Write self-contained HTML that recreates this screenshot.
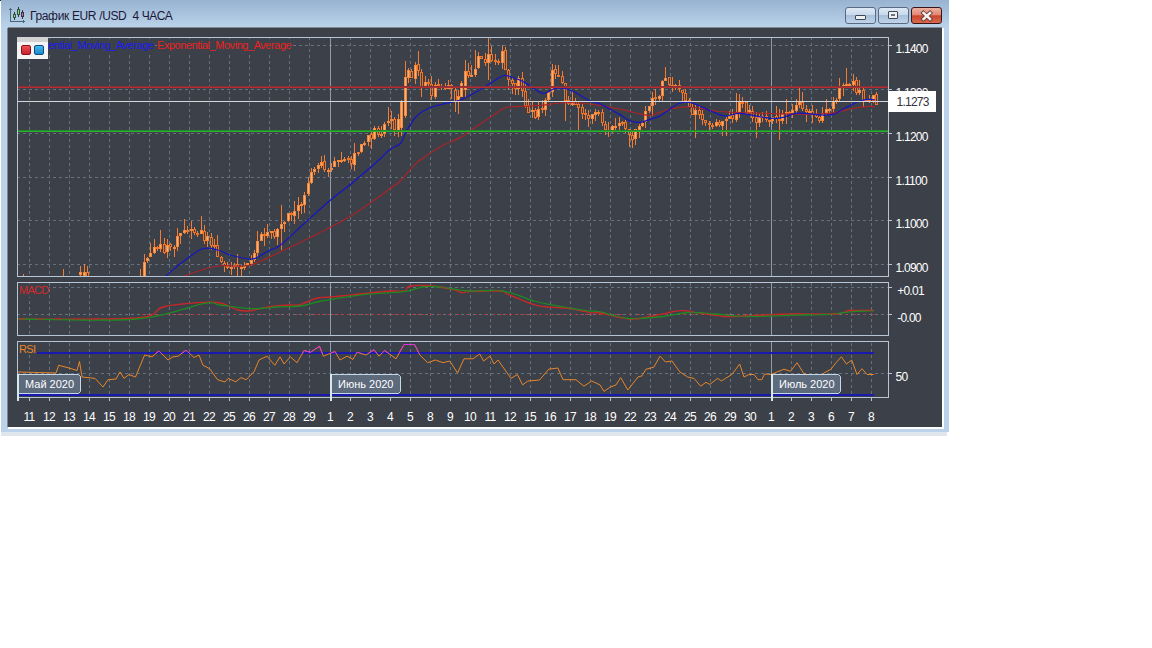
<!DOCTYPE html>
<html><head><meta charset="utf-8">
<style>
html,body{margin:0;padding:0;background:#fff;width:1152px;height:648px;overflow:hidden;font-family:"Liberation Sans",sans-serif;}
.abs{position:absolute;}
#win{left:1px;top:0;width:948px;height:432px;background:#bcd2ea;}
#tbar{left:1px;top:0;width:948px;height:27px;background:linear-gradient(#98b3d1,#bad3ea);}
#tline{left:8px;top:27px;width:934px;height:1px;background:#80878f;}
#shadow{left:1px;top:432px;width:946px;height:4px;background:#dfe6ee;}
#client{left:8px;top:28px;width:934px;height:399px;background:#3b4049;}
#wr{left:942px;top:28px;width:2px;height:401px;background:#fbfdff;}
#wb{left:8px;top:427px;width:936px;height:2px;background:#fbfdff;}
#wl{left:7px;top:28px;width:1px;height:399px;background:#7d8690;}
#title{left:30px;top:9px;font-size:12px;letter-spacing:-0.35px;color:#1c1838;white-space:nowrap;}
.btn{top:7px;width:29px;height:15px;border:1px solid #5a6a82;border-radius:3px;background:linear-gradient(#dfe9f5 0%,#c8d9ec 45%,#a9c0da 50%,#c0d4ea 100%);}
#bclose{border-color:#3a1414;background:linear-gradient(#eeb0a0 0%,#e08a76 45%,#c8452c 52%,#d86a50 100%);}
svg{position:absolute;left:0;top:0;}
#legend{left:17px;top:37px;width:31px;height:22px;background:#f4f4f4;}
#legend .strip{left:0;top:0;width:31px;height:5px;background:#d2d2d2;}
.sq{top:8px;width:8px;height:8px;border:1px solid;border-radius:2px;}
#lt{left:48px;top:39px;font-size:11px;letter-spacing:-0.45px;white-space:nowrap;overflow:hidden;width:106px;height:13px;background:#3b4049;}
.mlab{top:374px;height:17px;background:#5d6878;border:1px solid #c8dce8;border-radius:0 0 5px 0;color:#fff;font-size:12px;line-height:17px;padding-left:7px;box-sizing:content-box;}
#pbox{left:888px;top:91px;width:48px;height:21px;background:#fff;}
#ptxt{left:896.5px;top:95px;font-size:12px;letter-spacing:-0.75px;color:#333344;}
</style></head><body>
<div id="win" class="abs"></div><div class="abs" style="left:0;top:0;width:1px;height:1px;background:#202020"></div>
<div id="tbar" class="abs"></div>
<div id="shadow" class="abs"></div>
<div id="client" class="abs"></div>
<div id="tline" class="abs"></div>
<div id="wl" class="abs"></div>
<div id="wr" class="abs"></div>
<div id="wb" class="abs"></div>
<svg class="abs" width="28" height="28" style="left:0;top:0" shape-rendering="crispEdges">
<path d="M10.5 7.5v14h14" stroke="#4a6478" stroke-width="1" fill="none"/>
<path d="M9 9h3M23 20v3" stroke="#4a6478" stroke-width="1" fill="none"/>
<path d="M14.5 12v8M18.5 7v10M22.5 10v9" stroke="#2c3a40" stroke-width="1"/>
<rect x="13.5" y="14.5" width="2" height="3" fill="#9ad89a" stroke="#2e5a3a" stroke-width="1"/>
<rect x="17.5" y="9.5" width="2" height="5" fill="#8cd08c" stroke="#2e5a3a" stroke-width="1"/>
<rect x="21.5" y="12.5" width="2" height="4" fill="#c47a88" stroke="#3a2e4a" stroke-width="1"/>
</svg>
<div id="title" class="abs">График EUR /USD&nbsp; 4 ЧАСА</div>
<div class="abs btn" style="left:845px"><div class="abs" style="left:9px;top:7px;width:9px;height:3px;background:#eef0f2;border:1px solid #404858;border-radius:1px"></div></div>
<div class="abs btn" style="left:878px"><div class="abs" style="left:9px;top:3px;width:8px;height:6px;background:#eef0f2;border:1px solid #404858;border-radius:1px"><div class="abs" style="left:2px;top:2px;width:4px;height:2px;background:#6a7380"></div></div></div>
<div class="abs btn" id="bclose" style="left:911px"><svg class="abs" style="left:8px;top:2px" width="14" height="12"><path d="M3.5 3l6.5 6M10 3l-6.5 6" stroke="#6a3a30" stroke-width="4.2" stroke-linecap="square"/><path d="M3.5 3l6.5 6M10 3l-6.5 6" stroke="#f4f4f4" stroke-width="2.4" stroke-linecap="square"/></svg></div>
<svg width="1152" height="648" style="font-family:'Liberation Sans',sans-serif">
<path d="M29.5 38v2M29.5 43v3M29.5 49v3M29.5 55v3M29.5 61v3M29.5 67v3M29.5 73v3M29.5 79v3M29.5 85v3M29.5 91v3M29.5 97v3M29.5 103v3M29.5 109v3M29.5 115v3M29.5 121v3M29.5 127v3M29.5 133v3M29.5 139v3M29.5 145v3M29.5 151v3M29.5 157v3M29.5 163v3M29.5 169v3M29.5 175v3M29.5 181v3M29.5 187v3M29.5 193v3M29.5 199v3M29.5 205v3M29.5 211v3M29.5 217v3M29.5 223v3M29.5 229v3M29.5 235v3M29.5 241v3M29.5 247v3M29.5 253v3M29.5 259v3M29.5 265v3M29.5 271v3M49.5 38v2M49.5 43v3M49.5 49v3M49.5 55v3M49.5 61v3M49.5 67v3M49.5 73v3M49.5 79v3M49.5 85v3M49.5 91v3M49.5 97v3M49.5 103v3M49.5 109v3M49.5 115v3M49.5 121v3M49.5 127v3M49.5 133v3M49.5 139v3M49.5 145v3M49.5 151v3M49.5 157v3M49.5 163v3M49.5 169v3M49.5 175v3M49.5 181v3M49.5 187v3M49.5 193v3M49.5 199v3M49.5 205v3M49.5 211v3M49.5 217v3M49.5 223v3M49.5 229v3M49.5 235v3M49.5 241v3M49.5 247v3M49.5 253v3M49.5 259v3M49.5 265v3M49.5 271v3M69.5 38v2M69.5 43v3M69.5 49v3M69.5 55v3M69.5 61v3M69.5 67v3M69.5 73v3M69.5 79v3M69.5 85v3M69.5 91v3M69.5 97v3M69.5 103v3M69.5 109v3M69.5 115v3M69.5 121v3M69.5 127v3M69.5 133v3M69.5 139v3M69.5 145v3M69.5 151v3M69.5 157v3M69.5 163v3M69.5 169v3M69.5 175v3M69.5 181v3M69.5 187v3M69.5 193v3M69.5 199v3M69.5 205v3M69.5 211v3M69.5 217v3M69.5 223v3M69.5 229v3M69.5 235v3M69.5 241v3M69.5 247v3M69.5 253v3M69.5 259v3M69.5 265v3M69.5 271v3M89.5 38v2M89.5 43v3M89.5 49v3M89.5 55v3M89.5 61v3M89.5 67v3M89.5 73v3M89.5 79v3M89.5 85v3M89.5 91v3M89.5 97v3M89.5 103v3M89.5 109v3M89.5 115v3M89.5 121v3M89.5 127v3M89.5 133v3M89.5 139v3M89.5 145v3M89.5 151v3M89.5 157v3M89.5 163v3M89.5 169v3M89.5 175v3M89.5 181v3M89.5 187v3M89.5 193v3M89.5 199v3M89.5 205v3M89.5 211v3M89.5 217v3M89.5 223v3M89.5 229v3M89.5 235v3M89.5 241v3M89.5 247v3M89.5 253v3M89.5 259v3M89.5 265v3M89.5 271v3M109.5 38v2M109.5 43v3M109.5 49v3M109.5 55v3M109.5 61v3M109.5 67v3M109.5 73v3M109.5 79v3M109.5 85v3M109.5 91v3M109.5 97v3M109.5 103v3M109.5 109v3M109.5 115v3M109.5 121v3M109.5 127v3M109.5 133v3M109.5 139v3M109.5 145v3M109.5 151v3M109.5 157v3M109.5 163v3M109.5 169v3M109.5 175v3M109.5 181v3M109.5 187v3M109.5 193v3M109.5 199v3M109.5 205v3M109.5 211v3M109.5 217v3M109.5 223v3M109.5 229v3M109.5 235v3M109.5 241v3M109.5 247v3M109.5 253v3M109.5 259v3M109.5 265v3M109.5 271v3M129.5 38v2M129.5 43v3M129.5 49v3M129.5 55v3M129.5 61v3M129.5 67v3M129.5 73v3M129.5 79v3M129.5 85v3M129.5 91v3M129.5 97v3M129.5 103v3M129.5 109v3M129.5 115v3M129.5 121v3M129.5 127v3M129.5 133v3M129.5 139v3M129.5 145v3M129.5 151v3M129.5 157v3M129.5 163v3M129.5 169v3M129.5 175v3M129.5 181v3M129.5 187v3M129.5 193v3M129.5 199v3M129.5 205v3M129.5 211v3M129.5 217v3M129.5 223v3M129.5 229v3M129.5 235v3M129.5 241v3M129.5 247v3M129.5 253v3M129.5 259v3M129.5 265v3M129.5 271v3M149.5 38v2M149.5 43v3M149.5 49v3M149.5 55v3M149.5 61v3M149.5 67v3M149.5 73v3M149.5 79v3M149.5 85v3M149.5 91v3M149.5 97v3M149.5 103v3M149.5 109v3M149.5 115v3M149.5 121v3M149.5 127v3M149.5 133v3M149.5 139v3M149.5 145v3M149.5 151v3M149.5 157v3M149.5 163v3M149.5 169v3M149.5 175v3M149.5 181v3M149.5 187v3M149.5 193v3M149.5 199v3M149.5 205v3M149.5 211v3M149.5 217v3M149.5 223v3M149.5 229v3M149.5 235v3M149.5 241v3M149.5 247v3M149.5 253v3M149.5 259v3M149.5 265v3M149.5 271v3M169.5 38v2M169.5 43v3M169.5 49v3M169.5 55v3M169.5 61v3M169.5 67v3M169.5 73v3M169.5 79v3M169.5 85v3M169.5 91v3M169.5 97v3M169.5 103v3M169.5 109v3M169.5 115v3M169.5 121v3M169.5 127v3M169.5 133v3M169.5 139v3M169.5 145v3M169.5 151v3M169.5 157v3M169.5 163v3M169.5 169v3M169.5 175v3M169.5 181v3M169.5 187v3M169.5 193v3M169.5 199v3M169.5 205v3M169.5 211v3M169.5 217v3M169.5 223v3M169.5 229v3M169.5 235v3M169.5 241v3M169.5 247v3M169.5 253v3M169.5 259v3M169.5 265v3M169.5 271v3M189.5 38v2M189.5 43v3M189.5 49v3M189.5 55v3M189.5 61v3M189.5 67v3M189.5 73v3M189.5 79v3M189.5 85v3M189.5 91v3M189.5 97v3M189.5 103v3M189.5 109v3M189.5 115v3M189.5 121v3M189.5 127v3M189.5 133v3M189.5 139v3M189.5 145v3M189.5 151v3M189.5 157v3M189.5 163v3M189.5 169v3M189.5 175v3M189.5 181v3M189.5 187v3M189.5 193v3M189.5 199v3M189.5 205v3M189.5 211v3M189.5 217v3M189.5 223v3M189.5 229v3M189.5 235v3M189.5 241v3M189.5 247v3M189.5 253v3M189.5 259v3M189.5 265v3M189.5 271v3M209.5 38v2M209.5 43v3M209.5 49v3M209.5 55v3M209.5 61v3M209.5 67v3M209.5 73v3M209.5 79v3M209.5 85v3M209.5 91v3M209.5 97v3M209.5 103v3M209.5 109v3M209.5 115v3M209.5 121v3M209.5 127v3M209.5 133v3M209.5 139v3M209.5 145v3M209.5 151v3M209.5 157v3M209.5 163v3M209.5 169v3M209.5 175v3M209.5 181v3M209.5 187v3M209.5 193v3M209.5 199v3M209.5 205v3M209.5 211v3M209.5 217v3M209.5 223v3M209.5 229v3M209.5 235v3M209.5 241v3M209.5 247v3M209.5 253v3M209.5 259v3M209.5 265v3M209.5 271v3M229.5 38v2M229.5 43v3M229.5 49v3M229.5 55v3M229.5 61v3M229.5 67v3M229.5 73v3M229.5 79v3M229.5 85v3M229.5 91v3M229.5 97v3M229.5 103v3M229.5 109v3M229.5 115v3M229.5 121v3M229.5 127v3M229.5 133v3M229.5 139v3M229.5 145v3M229.5 151v3M229.5 157v3M229.5 163v3M229.5 169v3M229.5 175v3M229.5 181v3M229.5 187v3M229.5 193v3M229.5 199v3M229.5 205v3M229.5 211v3M229.5 217v3M229.5 223v3M229.5 229v3M229.5 235v3M229.5 241v3M229.5 247v3M229.5 253v3M229.5 259v3M229.5 265v3M229.5 271v3M249.5 38v2M249.5 43v3M249.5 49v3M249.5 55v3M249.5 61v3M249.5 67v3M249.5 73v3M249.5 79v3M249.5 85v3M249.5 91v3M249.5 97v3M249.5 103v3M249.5 109v3M249.5 115v3M249.5 121v3M249.5 127v3M249.5 133v3M249.5 139v3M249.5 145v3M249.5 151v3M249.5 157v3M249.5 163v3M249.5 169v3M249.5 175v3M249.5 181v3M249.5 187v3M249.5 193v3M249.5 199v3M249.5 205v3M249.5 211v3M249.5 217v3M249.5 223v3M249.5 229v3M249.5 235v3M249.5 241v3M249.5 247v3M249.5 253v3M249.5 259v3M249.5 265v3M249.5 271v3M269.5 38v2M269.5 43v3M269.5 49v3M269.5 55v3M269.5 61v3M269.5 67v3M269.5 73v3M269.5 79v3M269.5 85v3M269.5 91v3M269.5 97v3M269.5 103v3M269.5 109v3M269.5 115v3M269.5 121v3M269.5 127v3M269.5 133v3M269.5 139v3M269.5 145v3M269.5 151v3M269.5 157v3M269.5 163v3M269.5 169v3M269.5 175v3M269.5 181v3M269.5 187v3M269.5 193v3M269.5 199v3M269.5 205v3M269.5 211v3M269.5 217v3M269.5 223v3M269.5 229v3M269.5 235v3M269.5 241v3M269.5 247v3M269.5 253v3M269.5 259v3M269.5 265v3M269.5 271v3M289.5 38v2M289.5 43v3M289.5 49v3M289.5 55v3M289.5 61v3M289.5 67v3M289.5 73v3M289.5 79v3M289.5 85v3M289.5 91v3M289.5 97v3M289.5 103v3M289.5 109v3M289.5 115v3M289.5 121v3M289.5 127v3M289.5 133v3M289.5 139v3M289.5 145v3M289.5 151v3M289.5 157v3M289.5 163v3M289.5 169v3M289.5 175v3M289.5 181v3M289.5 187v3M289.5 193v3M289.5 199v3M289.5 205v3M289.5 211v3M289.5 217v3M289.5 223v3M289.5 229v3M289.5 235v3M289.5 241v3M289.5 247v3M289.5 253v3M289.5 259v3M289.5 265v3M289.5 271v3M309.5 38v2M309.5 43v3M309.5 49v3M309.5 55v3M309.5 61v3M309.5 67v3M309.5 73v3M309.5 79v3M309.5 85v3M309.5 91v3M309.5 97v3M309.5 103v3M309.5 109v3M309.5 115v3M309.5 121v3M309.5 127v3M309.5 133v3M309.5 139v3M309.5 145v3M309.5 151v3M309.5 157v3M309.5 163v3M309.5 169v3M309.5 175v3M309.5 181v3M309.5 187v3M309.5 193v3M309.5 199v3M309.5 205v3M309.5 211v3M309.5 217v3M309.5 223v3M309.5 229v3M309.5 235v3M309.5 241v3M309.5 247v3M309.5 253v3M309.5 259v3M309.5 265v3M309.5 271v3M350.5 38v2M350.5 43v3M350.5 49v3M350.5 55v3M350.5 61v3M350.5 67v3M350.5 73v3M350.5 79v3M350.5 85v3M350.5 91v3M350.5 97v3M350.5 103v3M350.5 109v3M350.5 115v3M350.5 121v3M350.5 127v3M350.5 133v3M350.5 139v3M350.5 145v3M350.5 151v3M350.5 157v3M350.5 163v3M350.5 169v3M350.5 175v3M350.5 181v3M350.5 187v3M350.5 193v3M350.5 199v3M350.5 205v3M350.5 211v3M350.5 217v3M350.5 223v3M350.5 229v3M350.5 235v3M350.5 241v3M350.5 247v3M350.5 253v3M350.5 259v3M350.5 265v3M350.5 271v3M370.5 38v2M370.5 43v3M370.5 49v3M370.5 55v3M370.5 61v3M370.5 67v3M370.5 73v3M370.5 79v3M370.5 85v3M370.5 91v3M370.5 97v3M370.5 103v3M370.5 109v3M370.5 115v3M370.5 121v3M370.5 127v3M370.5 133v3M370.5 139v3M370.5 145v3M370.5 151v3M370.5 157v3M370.5 163v3M370.5 169v3M370.5 175v3M370.5 181v3M370.5 187v3M370.5 193v3M370.5 199v3M370.5 205v3M370.5 211v3M370.5 217v3M370.5 223v3M370.5 229v3M370.5 235v3M370.5 241v3M370.5 247v3M370.5 253v3M370.5 259v3M370.5 265v3M370.5 271v3M390.5 38v2M390.5 43v3M390.5 49v3M390.5 55v3M390.5 61v3M390.5 67v3M390.5 73v3M390.5 79v3M390.5 85v3M390.5 91v3M390.5 97v3M390.5 103v3M390.5 109v3M390.5 115v3M390.5 121v3M390.5 127v3M390.5 133v3M390.5 139v3M390.5 145v3M390.5 151v3M390.5 157v3M390.5 163v3M390.5 169v3M390.5 175v3M390.5 181v3M390.5 187v3M390.5 193v3M390.5 199v3M390.5 205v3M390.5 211v3M390.5 217v3M390.5 223v3M390.5 229v3M390.5 235v3M390.5 241v3M390.5 247v3M390.5 253v3M390.5 259v3M390.5 265v3M390.5 271v3M410.5 38v2M410.5 43v3M410.5 49v3M410.5 55v3M410.5 61v3M410.5 67v3M410.5 73v3M410.5 79v3M410.5 85v3M410.5 91v3M410.5 97v3M410.5 103v3M410.5 109v3M410.5 115v3M410.5 121v3M410.5 127v3M410.5 133v3M410.5 139v3M410.5 145v3M410.5 151v3M410.5 157v3M410.5 163v3M410.5 169v3M410.5 175v3M410.5 181v3M410.5 187v3M410.5 193v3M410.5 199v3M410.5 205v3M410.5 211v3M410.5 217v3M410.5 223v3M410.5 229v3M410.5 235v3M410.5 241v3M410.5 247v3M410.5 253v3M410.5 259v3M410.5 265v3M410.5 271v3M430.5 38v2M430.5 43v3M430.5 49v3M430.5 55v3M430.5 61v3M430.5 67v3M430.5 73v3M430.5 79v3M430.5 85v3M430.5 91v3M430.5 97v3M430.5 103v3M430.5 109v3M430.5 115v3M430.5 121v3M430.5 127v3M430.5 133v3M430.5 139v3M430.5 145v3M430.5 151v3M430.5 157v3M430.5 163v3M430.5 169v3M430.5 175v3M430.5 181v3M430.5 187v3M430.5 193v3M430.5 199v3M430.5 205v3M430.5 211v3M430.5 217v3M430.5 223v3M430.5 229v3M430.5 235v3M430.5 241v3M430.5 247v3M430.5 253v3M430.5 259v3M430.5 265v3M430.5 271v3M450.5 38v2M450.5 43v3M450.5 49v3M450.5 55v3M450.5 61v3M450.5 67v3M450.5 73v3M450.5 79v3M450.5 85v3M450.5 91v3M450.5 97v3M450.5 103v3M450.5 109v3M450.5 115v3M450.5 121v3M450.5 127v3M450.5 133v3M450.5 139v3M450.5 145v3M450.5 151v3M450.5 157v3M450.5 163v3M450.5 169v3M450.5 175v3M450.5 181v3M450.5 187v3M450.5 193v3M450.5 199v3M450.5 205v3M450.5 211v3M450.5 217v3M450.5 223v3M450.5 229v3M450.5 235v3M450.5 241v3M450.5 247v3M450.5 253v3M450.5 259v3M450.5 265v3M450.5 271v3M470.5 38v2M470.5 43v3M470.5 49v3M470.5 55v3M470.5 61v3M470.5 67v3M470.5 73v3M470.5 79v3M470.5 85v3M470.5 91v3M470.5 97v3M470.5 103v3M470.5 109v3M470.5 115v3M470.5 121v3M470.5 127v3M470.5 133v3M470.5 139v3M470.5 145v3M470.5 151v3M470.5 157v3M470.5 163v3M470.5 169v3M470.5 175v3M470.5 181v3M470.5 187v3M470.5 193v3M470.5 199v3M470.5 205v3M470.5 211v3M470.5 217v3M470.5 223v3M470.5 229v3M470.5 235v3M470.5 241v3M470.5 247v3M470.5 253v3M470.5 259v3M470.5 265v3M470.5 271v3M490.5 38v2M490.5 43v3M490.5 49v3M490.5 55v3M490.5 61v3M490.5 67v3M490.5 73v3M490.5 79v3M490.5 85v3M490.5 91v3M490.5 97v3M490.5 103v3M490.5 109v3M490.5 115v3M490.5 121v3M490.5 127v3M490.5 133v3M490.5 139v3M490.5 145v3M490.5 151v3M490.5 157v3M490.5 163v3M490.5 169v3M490.5 175v3M490.5 181v3M490.5 187v3M490.5 193v3M490.5 199v3M490.5 205v3M490.5 211v3M490.5 217v3M490.5 223v3M490.5 229v3M490.5 235v3M490.5 241v3M490.5 247v3M490.5 253v3M490.5 259v3M490.5 265v3M490.5 271v3M510.5 38v2M510.5 43v3M510.5 49v3M510.5 55v3M510.5 61v3M510.5 67v3M510.5 73v3M510.5 79v3M510.5 85v3M510.5 91v3M510.5 97v3M510.5 103v3M510.5 109v3M510.5 115v3M510.5 121v3M510.5 127v3M510.5 133v3M510.5 139v3M510.5 145v3M510.5 151v3M510.5 157v3M510.5 163v3M510.5 169v3M510.5 175v3M510.5 181v3M510.5 187v3M510.5 193v3M510.5 199v3M510.5 205v3M510.5 211v3M510.5 217v3M510.5 223v3M510.5 229v3M510.5 235v3M510.5 241v3M510.5 247v3M510.5 253v3M510.5 259v3M510.5 265v3M510.5 271v3M530.5 38v2M530.5 43v3M530.5 49v3M530.5 55v3M530.5 61v3M530.5 67v3M530.5 73v3M530.5 79v3M530.5 85v3M530.5 91v3M530.5 97v3M530.5 103v3M530.5 109v3M530.5 115v3M530.5 121v3M530.5 127v3M530.5 133v3M530.5 139v3M530.5 145v3M530.5 151v3M530.5 157v3M530.5 163v3M530.5 169v3M530.5 175v3M530.5 181v3M530.5 187v3M530.5 193v3M530.5 199v3M530.5 205v3M530.5 211v3M530.5 217v3M530.5 223v3M530.5 229v3M530.5 235v3M530.5 241v3M530.5 247v3M530.5 253v3M530.5 259v3M530.5 265v3M530.5 271v3M550.5 38v2M550.5 43v3M550.5 49v3M550.5 55v3M550.5 61v3M550.5 67v3M550.5 73v3M550.5 79v3M550.5 85v3M550.5 91v3M550.5 97v3M550.5 103v3M550.5 109v3M550.5 115v3M550.5 121v3M550.5 127v3M550.5 133v3M550.5 139v3M550.5 145v3M550.5 151v3M550.5 157v3M550.5 163v3M550.5 169v3M550.5 175v3M550.5 181v3M550.5 187v3M550.5 193v3M550.5 199v3M550.5 205v3M550.5 211v3M550.5 217v3M550.5 223v3M550.5 229v3M550.5 235v3M550.5 241v3M550.5 247v3M550.5 253v3M550.5 259v3M550.5 265v3M550.5 271v3M570.5 38v2M570.5 43v3M570.5 49v3M570.5 55v3M570.5 61v3M570.5 67v3M570.5 73v3M570.5 79v3M570.5 85v3M570.5 91v3M570.5 97v3M570.5 103v3M570.5 109v3M570.5 115v3M570.5 121v3M570.5 127v3M570.5 133v3M570.5 139v3M570.5 145v3M570.5 151v3M570.5 157v3M570.5 163v3M570.5 169v3M570.5 175v3M570.5 181v3M570.5 187v3M570.5 193v3M570.5 199v3M570.5 205v3M570.5 211v3M570.5 217v3M570.5 223v3M570.5 229v3M570.5 235v3M570.5 241v3M570.5 247v3M570.5 253v3M570.5 259v3M570.5 265v3M570.5 271v3M590.5 38v2M590.5 43v3M590.5 49v3M590.5 55v3M590.5 61v3M590.5 67v3M590.5 73v3M590.5 79v3M590.5 85v3M590.5 91v3M590.5 97v3M590.5 103v3M590.5 109v3M590.5 115v3M590.5 121v3M590.5 127v3M590.5 133v3M590.5 139v3M590.5 145v3M590.5 151v3M590.5 157v3M590.5 163v3M590.5 169v3M590.5 175v3M590.5 181v3M590.5 187v3M590.5 193v3M590.5 199v3M590.5 205v3M590.5 211v3M590.5 217v3M590.5 223v3M590.5 229v3M590.5 235v3M590.5 241v3M590.5 247v3M590.5 253v3M590.5 259v3M590.5 265v3M590.5 271v3M610.5 38v2M610.5 43v3M610.5 49v3M610.5 55v3M610.5 61v3M610.5 67v3M610.5 73v3M610.5 79v3M610.5 85v3M610.5 91v3M610.5 97v3M610.5 103v3M610.5 109v3M610.5 115v3M610.5 121v3M610.5 127v3M610.5 133v3M610.5 139v3M610.5 145v3M610.5 151v3M610.5 157v3M610.5 163v3M610.5 169v3M610.5 175v3M610.5 181v3M610.5 187v3M610.5 193v3M610.5 199v3M610.5 205v3M610.5 211v3M610.5 217v3M610.5 223v3M610.5 229v3M610.5 235v3M610.5 241v3M610.5 247v3M610.5 253v3M610.5 259v3M610.5 265v3M610.5 271v3M630.5 38v2M630.5 43v3M630.5 49v3M630.5 55v3M630.5 61v3M630.5 67v3M630.5 73v3M630.5 79v3M630.5 85v3M630.5 91v3M630.5 97v3M630.5 103v3M630.5 109v3M630.5 115v3M630.5 121v3M630.5 127v3M630.5 133v3M630.5 139v3M630.5 145v3M630.5 151v3M630.5 157v3M630.5 163v3M630.5 169v3M630.5 175v3M630.5 181v3M630.5 187v3M630.5 193v3M630.5 199v3M630.5 205v3M630.5 211v3M630.5 217v3M630.5 223v3M630.5 229v3M630.5 235v3M630.5 241v3M630.5 247v3M630.5 253v3M630.5 259v3M630.5 265v3M630.5 271v3M650.5 38v2M650.5 43v3M650.5 49v3M650.5 55v3M650.5 61v3M650.5 67v3M650.5 73v3M650.5 79v3M650.5 85v3M650.5 91v3M650.5 97v3M650.5 103v3M650.5 109v3M650.5 115v3M650.5 121v3M650.5 127v3M650.5 133v3M650.5 139v3M650.5 145v3M650.5 151v3M650.5 157v3M650.5 163v3M650.5 169v3M650.5 175v3M650.5 181v3M650.5 187v3M650.5 193v3M650.5 199v3M650.5 205v3M650.5 211v3M650.5 217v3M650.5 223v3M650.5 229v3M650.5 235v3M650.5 241v3M650.5 247v3M650.5 253v3M650.5 259v3M650.5 265v3M650.5 271v3M670.5 38v2M670.5 43v3M670.5 49v3M670.5 55v3M670.5 61v3M670.5 67v3M670.5 73v3M670.5 79v3M670.5 85v3M670.5 91v3M670.5 97v3M670.5 103v3M670.5 109v3M670.5 115v3M670.5 121v3M670.5 127v3M670.5 133v3M670.5 139v3M670.5 145v3M670.5 151v3M670.5 157v3M670.5 163v3M670.5 169v3M670.5 175v3M670.5 181v3M670.5 187v3M670.5 193v3M670.5 199v3M670.5 205v3M670.5 211v3M670.5 217v3M670.5 223v3M670.5 229v3M670.5 235v3M670.5 241v3M670.5 247v3M670.5 253v3M670.5 259v3M670.5 265v3M670.5 271v3M690.5 38v2M690.5 43v3M690.5 49v3M690.5 55v3M690.5 61v3M690.5 67v3M690.5 73v3M690.5 79v3M690.5 85v3M690.5 91v3M690.5 97v3M690.5 103v3M690.5 109v3M690.5 115v3M690.5 121v3M690.5 127v3M690.5 133v3M690.5 139v3M690.5 145v3M690.5 151v3M690.5 157v3M690.5 163v3M690.5 169v3M690.5 175v3M690.5 181v3M690.5 187v3M690.5 193v3M690.5 199v3M690.5 205v3M690.5 211v3M690.5 217v3M690.5 223v3M690.5 229v3M690.5 235v3M690.5 241v3M690.5 247v3M690.5 253v3M690.5 259v3M690.5 265v3M690.5 271v3M710.5 38v2M710.5 43v3M710.5 49v3M710.5 55v3M710.5 61v3M710.5 67v3M710.5 73v3M710.5 79v3M710.5 85v3M710.5 91v3M710.5 97v3M710.5 103v3M710.5 109v3M710.5 115v3M710.5 121v3M710.5 127v3M710.5 133v3M710.5 139v3M710.5 145v3M710.5 151v3M710.5 157v3M710.5 163v3M710.5 169v3M710.5 175v3M710.5 181v3M710.5 187v3M710.5 193v3M710.5 199v3M710.5 205v3M710.5 211v3M710.5 217v3M710.5 223v3M710.5 229v3M710.5 235v3M710.5 241v3M710.5 247v3M710.5 253v3M710.5 259v3M710.5 265v3M710.5 271v3M730.5 38v2M730.5 43v3M730.5 49v3M730.5 55v3M730.5 61v3M730.5 67v3M730.5 73v3M730.5 79v3M730.5 85v3M730.5 91v3M730.5 97v3M730.5 103v3M730.5 109v3M730.5 115v3M730.5 121v3M730.5 127v3M730.5 133v3M730.5 139v3M730.5 145v3M730.5 151v3M730.5 157v3M730.5 163v3M730.5 169v3M730.5 175v3M730.5 181v3M730.5 187v3M730.5 193v3M730.5 199v3M730.5 205v3M730.5 211v3M730.5 217v3M730.5 223v3M730.5 229v3M730.5 235v3M730.5 241v3M730.5 247v3M730.5 253v3M730.5 259v3M730.5 265v3M730.5 271v3M750.5 38v2M750.5 43v3M750.5 49v3M750.5 55v3M750.5 61v3M750.5 67v3M750.5 73v3M750.5 79v3M750.5 85v3M750.5 91v3M750.5 97v3M750.5 103v3M750.5 109v3M750.5 115v3M750.5 121v3M750.5 127v3M750.5 133v3M750.5 139v3M750.5 145v3M750.5 151v3M750.5 157v3M750.5 163v3M750.5 169v3M750.5 175v3M750.5 181v3M750.5 187v3M750.5 193v3M750.5 199v3M750.5 205v3M750.5 211v3M750.5 217v3M750.5 223v3M750.5 229v3M750.5 235v3M750.5 241v3M750.5 247v3M750.5 253v3M750.5 259v3M750.5 265v3M750.5 271v3M791.5 38v2M791.5 43v3M791.5 49v3M791.5 55v3M791.5 61v3M791.5 67v3M791.5 73v3M791.5 79v3M791.5 85v3M791.5 91v3M791.5 97v3M791.5 103v3M791.5 109v3M791.5 115v3M791.5 121v3M791.5 127v3M791.5 133v3M791.5 139v3M791.5 145v3M791.5 151v3M791.5 157v3M791.5 163v3M791.5 169v3M791.5 175v3M791.5 181v3M791.5 187v3M791.5 193v3M791.5 199v3M791.5 205v3M791.5 211v3M791.5 217v3M791.5 223v3M791.5 229v3M791.5 235v3M791.5 241v3M791.5 247v3M791.5 253v3M791.5 259v3M791.5 265v3M791.5 271v3M811.5 38v2M811.5 43v3M811.5 49v3M811.5 55v3M811.5 61v3M811.5 67v3M811.5 73v3M811.5 79v3M811.5 85v3M811.5 91v3M811.5 97v3M811.5 103v3M811.5 109v3M811.5 115v3M811.5 121v3M811.5 127v3M811.5 133v3M811.5 139v3M811.5 145v3M811.5 151v3M811.5 157v3M811.5 163v3M811.5 169v3M811.5 175v3M811.5 181v3M811.5 187v3M811.5 193v3M811.5 199v3M811.5 205v3M811.5 211v3M811.5 217v3M811.5 223v3M811.5 229v3M811.5 235v3M811.5 241v3M811.5 247v3M811.5 253v3M811.5 259v3M811.5 265v3M811.5 271v3M831.5 38v2M831.5 43v3M831.5 49v3M831.5 55v3M831.5 61v3M831.5 67v3M831.5 73v3M831.5 79v3M831.5 85v3M831.5 91v3M831.5 97v3M831.5 103v3M831.5 109v3M831.5 115v3M831.5 121v3M831.5 127v3M831.5 133v3M831.5 139v3M831.5 145v3M831.5 151v3M831.5 157v3M831.5 163v3M831.5 169v3M831.5 175v3M831.5 181v3M831.5 187v3M831.5 193v3M831.5 199v3M831.5 205v3M831.5 211v3M831.5 217v3M831.5 223v3M831.5 229v3M831.5 235v3M831.5 241v3M831.5 247v3M831.5 253v3M831.5 259v3M831.5 265v3M831.5 271v3M851.5 38v2M851.5 43v3M851.5 49v3M851.5 55v3M851.5 61v3M851.5 67v3M851.5 73v3M851.5 79v3M851.5 85v3M851.5 91v3M851.5 97v3M851.5 103v3M851.5 109v3M851.5 115v3M851.5 121v3M851.5 127v3M851.5 133v3M851.5 139v3M851.5 145v3M851.5 151v3M851.5 157v3M851.5 163v3M851.5 169v3M851.5 175v3M851.5 181v3M851.5 187v3M851.5 193v3M851.5 199v3M851.5 205v3M851.5 211v3M851.5 217v3M851.5 223v3M851.5 229v3M851.5 235v3M851.5 241v3M851.5 247v3M851.5 253v3M851.5 259v3M851.5 265v3M851.5 271v3M871.5 38v2M871.5 43v3M871.5 49v3M871.5 55v3M871.5 61v3M871.5 67v3M871.5 73v3M871.5 79v3M871.5 85v3M871.5 91v3M871.5 97v3M871.5 103v3M871.5 109v3M871.5 115v3M871.5 121v3M871.5 127v3M871.5 133v3M871.5 139v3M871.5 145v3M871.5 151v3M871.5 157v3M871.5 163v3M871.5 169v3M871.5 175v3M871.5 181v3M871.5 187v3M871.5 193v3M871.5 199v3M871.5 205v3M871.5 211v3M871.5 217v3M871.5 223v3M871.5 229v3M871.5 235v3M871.5 241v3M871.5 247v3M871.5 253v3M871.5 259v3M871.5 265v3M871.5 271v3M29.5 283v3M29.5 289v3M29.5 295v3M29.5 301v3M29.5 307v3M29.5 313v3M29.5 319v3M29.5 325v3M29.5 331v3M49.5 283v3M49.5 289v3M49.5 295v3M49.5 301v3M49.5 307v3M49.5 313v3M49.5 319v3M49.5 325v3M49.5 331v3M69.5 283v3M69.5 289v3M69.5 295v3M69.5 301v3M69.5 307v3M69.5 313v3M69.5 319v3M69.5 325v3M69.5 331v3M89.5 283v3M89.5 289v3M89.5 295v3M89.5 301v3M89.5 307v3M89.5 313v3M89.5 319v3M89.5 325v3M89.5 331v3M109.5 283v3M109.5 289v3M109.5 295v3M109.5 301v3M109.5 307v3M109.5 313v3M109.5 319v3M109.5 325v3M109.5 331v3M129.5 283v3M129.5 289v3M129.5 295v3M129.5 301v3M129.5 307v3M129.5 313v3M129.5 319v3M129.5 325v3M129.5 331v3M149.5 283v3M149.5 289v3M149.5 295v3M149.5 301v3M149.5 307v3M149.5 313v3M149.5 319v3M149.5 325v3M149.5 331v3M169.5 283v3M169.5 289v3M169.5 295v3M169.5 301v3M169.5 307v3M169.5 313v3M169.5 319v3M169.5 325v3M169.5 331v3M189.5 283v3M189.5 289v3M189.5 295v3M189.5 301v3M189.5 307v3M189.5 313v3M189.5 319v3M189.5 325v3M189.5 331v3M209.5 283v3M209.5 289v3M209.5 295v3M209.5 301v3M209.5 307v3M209.5 313v3M209.5 319v3M209.5 325v3M209.5 331v3M229.5 283v3M229.5 289v3M229.5 295v3M229.5 301v3M229.5 307v3M229.5 313v3M229.5 319v3M229.5 325v3M229.5 331v3M249.5 283v3M249.5 289v3M249.5 295v3M249.5 301v3M249.5 307v3M249.5 313v3M249.5 319v3M249.5 325v3M249.5 331v3M269.5 283v3M269.5 289v3M269.5 295v3M269.5 301v3M269.5 307v3M269.5 313v3M269.5 319v3M269.5 325v3M269.5 331v3M289.5 283v3M289.5 289v3M289.5 295v3M289.5 301v3M289.5 307v3M289.5 313v3M289.5 319v3M289.5 325v3M289.5 331v3M309.5 283v3M309.5 289v3M309.5 295v3M309.5 301v3M309.5 307v3M309.5 313v3M309.5 319v3M309.5 325v3M309.5 331v3M350.5 283v3M350.5 289v3M350.5 295v3M350.5 301v3M350.5 307v3M350.5 313v3M350.5 319v3M350.5 325v3M350.5 331v3M370.5 283v3M370.5 289v3M370.5 295v3M370.5 301v3M370.5 307v3M370.5 313v3M370.5 319v3M370.5 325v3M370.5 331v3M390.5 283v3M390.5 289v3M390.5 295v3M390.5 301v3M390.5 307v3M390.5 313v3M390.5 319v3M390.5 325v3M390.5 331v3M410.5 283v3M410.5 289v3M410.5 295v3M410.5 301v3M410.5 307v3M410.5 313v3M410.5 319v3M410.5 325v3M410.5 331v3M430.5 283v3M430.5 289v3M430.5 295v3M430.5 301v3M430.5 307v3M430.5 313v3M430.5 319v3M430.5 325v3M430.5 331v3M450.5 283v3M450.5 289v3M450.5 295v3M450.5 301v3M450.5 307v3M450.5 313v3M450.5 319v3M450.5 325v3M450.5 331v3M470.5 283v3M470.5 289v3M470.5 295v3M470.5 301v3M470.5 307v3M470.5 313v3M470.5 319v3M470.5 325v3M470.5 331v3M490.5 283v3M490.5 289v3M490.5 295v3M490.5 301v3M490.5 307v3M490.5 313v3M490.5 319v3M490.5 325v3M490.5 331v3M510.5 283v3M510.5 289v3M510.5 295v3M510.5 301v3M510.5 307v3M510.5 313v3M510.5 319v3M510.5 325v3M510.5 331v3M530.5 283v3M530.5 289v3M530.5 295v3M530.5 301v3M530.5 307v3M530.5 313v3M530.5 319v3M530.5 325v3M530.5 331v3M550.5 283v3M550.5 289v3M550.5 295v3M550.5 301v3M550.5 307v3M550.5 313v3M550.5 319v3M550.5 325v3M550.5 331v3M570.5 283v3M570.5 289v3M570.5 295v3M570.5 301v3M570.5 307v3M570.5 313v3M570.5 319v3M570.5 325v3M570.5 331v3M590.5 283v3M590.5 289v3M590.5 295v3M590.5 301v3M590.5 307v3M590.5 313v3M590.5 319v3M590.5 325v3M590.5 331v3M610.5 283v3M610.5 289v3M610.5 295v3M610.5 301v3M610.5 307v3M610.5 313v3M610.5 319v3M610.5 325v3M610.5 331v3M630.5 283v3M630.5 289v3M630.5 295v3M630.5 301v3M630.5 307v3M630.5 313v3M630.5 319v3M630.5 325v3M630.5 331v3M650.5 283v3M650.5 289v3M650.5 295v3M650.5 301v3M650.5 307v3M650.5 313v3M650.5 319v3M650.5 325v3M650.5 331v3M670.5 283v3M670.5 289v3M670.5 295v3M670.5 301v3M670.5 307v3M670.5 313v3M670.5 319v3M670.5 325v3M670.5 331v3M690.5 283v3M690.5 289v3M690.5 295v3M690.5 301v3M690.5 307v3M690.5 313v3M690.5 319v3M690.5 325v3M690.5 331v3M710.5 283v3M710.5 289v3M710.5 295v3M710.5 301v3M710.5 307v3M710.5 313v3M710.5 319v3M710.5 325v3M710.5 331v3M730.5 283v3M730.5 289v3M730.5 295v3M730.5 301v3M730.5 307v3M730.5 313v3M730.5 319v3M730.5 325v3M730.5 331v3M750.5 283v3M750.5 289v3M750.5 295v3M750.5 301v3M750.5 307v3M750.5 313v3M750.5 319v3M750.5 325v3M750.5 331v3M791.5 283v3M791.5 289v3M791.5 295v3M791.5 301v3M791.5 307v3M791.5 313v3M791.5 319v3M791.5 325v3M791.5 331v3M811.5 283v3M811.5 289v3M811.5 295v3M811.5 301v3M811.5 307v3M811.5 313v3M811.5 319v3M811.5 325v3M811.5 331v3M831.5 283v3M831.5 289v3M831.5 295v3M831.5 301v3M831.5 307v3M831.5 313v3M831.5 319v3M831.5 325v3M831.5 331v3M851.5 283v3M851.5 289v3M851.5 295v3M851.5 301v3M851.5 307v3M851.5 313v3M851.5 319v3M851.5 325v3M851.5 331v3M871.5 283v3M871.5 289v3M871.5 295v3M871.5 301v3M871.5 307v3M871.5 313v3M871.5 319v3M871.5 325v3M871.5 331v3M29.5 343v3M29.5 349v3M29.5 355v3M29.5 361v3M29.5 367v3M29.5 373v3M29.5 379v3M29.5 385v3M29.5 391v3M49.5 343v3M49.5 349v3M49.5 355v3M49.5 361v3M49.5 367v3M49.5 373v3M49.5 379v3M49.5 385v3M49.5 391v3M69.5 343v3M69.5 349v3M69.5 355v3M69.5 361v3M69.5 367v3M69.5 373v3M69.5 379v3M69.5 385v3M69.5 391v3M89.5 343v3M89.5 349v3M89.5 355v3M89.5 361v3M89.5 367v3M89.5 373v3M89.5 379v3M89.5 385v3M89.5 391v3M109.5 343v3M109.5 349v3M109.5 355v3M109.5 361v3M109.5 367v3M109.5 373v3M109.5 379v3M109.5 385v3M109.5 391v3M129.5 343v3M129.5 349v3M129.5 355v3M129.5 361v3M129.5 367v3M129.5 373v3M129.5 379v3M129.5 385v3M129.5 391v3M149.5 343v3M149.5 349v3M149.5 355v3M149.5 361v3M149.5 367v3M149.5 373v3M149.5 379v3M149.5 385v3M149.5 391v3M169.5 343v3M169.5 349v3M169.5 355v3M169.5 361v3M169.5 367v3M169.5 373v3M169.5 379v3M169.5 385v3M169.5 391v3M189.5 343v3M189.5 349v3M189.5 355v3M189.5 361v3M189.5 367v3M189.5 373v3M189.5 379v3M189.5 385v3M189.5 391v3M209.5 343v3M209.5 349v3M209.5 355v3M209.5 361v3M209.5 367v3M209.5 373v3M209.5 379v3M209.5 385v3M209.5 391v3M229.5 343v3M229.5 349v3M229.5 355v3M229.5 361v3M229.5 367v3M229.5 373v3M229.5 379v3M229.5 385v3M229.5 391v3M249.5 343v3M249.5 349v3M249.5 355v3M249.5 361v3M249.5 367v3M249.5 373v3M249.5 379v3M249.5 385v3M249.5 391v3M269.5 343v3M269.5 349v3M269.5 355v3M269.5 361v3M269.5 367v3M269.5 373v3M269.5 379v3M269.5 385v3M269.5 391v3M289.5 343v3M289.5 349v3M289.5 355v3M289.5 361v3M289.5 367v3M289.5 373v3M289.5 379v3M289.5 385v3M289.5 391v3M309.5 343v3M309.5 349v3M309.5 355v3M309.5 361v3M309.5 367v3M309.5 373v3M309.5 379v3M309.5 385v3M309.5 391v3M350.5 343v3M350.5 349v3M350.5 355v3M350.5 361v3M350.5 367v3M350.5 373v3M350.5 379v3M350.5 385v3M350.5 391v3M370.5 343v3M370.5 349v3M370.5 355v3M370.5 361v3M370.5 367v3M370.5 373v3M370.5 379v3M370.5 385v3M370.5 391v3M390.5 343v3M390.5 349v3M390.5 355v3M390.5 361v3M390.5 367v3M390.5 373v3M390.5 379v3M390.5 385v3M390.5 391v3M410.5 343v3M410.5 349v3M410.5 355v3M410.5 361v3M410.5 367v3M410.5 373v3M410.5 379v3M410.5 385v3M410.5 391v3M430.5 343v3M430.5 349v3M430.5 355v3M430.5 361v3M430.5 367v3M430.5 373v3M430.5 379v3M430.5 385v3M430.5 391v3M450.5 343v3M450.5 349v3M450.5 355v3M450.5 361v3M450.5 367v3M450.5 373v3M450.5 379v3M450.5 385v3M450.5 391v3M470.5 343v3M470.5 349v3M470.5 355v3M470.5 361v3M470.5 367v3M470.5 373v3M470.5 379v3M470.5 385v3M470.5 391v3M490.5 343v3M490.5 349v3M490.5 355v3M490.5 361v3M490.5 367v3M490.5 373v3M490.5 379v3M490.5 385v3M490.5 391v3M510.5 343v3M510.5 349v3M510.5 355v3M510.5 361v3M510.5 367v3M510.5 373v3M510.5 379v3M510.5 385v3M510.5 391v3M530.5 343v3M530.5 349v3M530.5 355v3M530.5 361v3M530.5 367v3M530.5 373v3M530.5 379v3M530.5 385v3M530.5 391v3M550.5 343v3M550.5 349v3M550.5 355v3M550.5 361v3M550.5 367v3M550.5 373v3M550.5 379v3M550.5 385v3M550.5 391v3M570.5 343v3M570.5 349v3M570.5 355v3M570.5 361v3M570.5 367v3M570.5 373v3M570.5 379v3M570.5 385v3M570.5 391v3M590.5 343v3M590.5 349v3M590.5 355v3M590.5 361v3M590.5 367v3M590.5 373v3M590.5 379v3M590.5 385v3M590.5 391v3M610.5 343v3M610.5 349v3M610.5 355v3M610.5 361v3M610.5 367v3M610.5 373v3M610.5 379v3M610.5 385v3M610.5 391v3M630.5 343v3M630.5 349v3M630.5 355v3M630.5 361v3M630.5 367v3M630.5 373v3M630.5 379v3M630.5 385v3M630.5 391v3M650.5 343v3M650.5 349v3M650.5 355v3M650.5 361v3M650.5 367v3M650.5 373v3M650.5 379v3M650.5 385v3M650.5 391v3M670.5 343v3M670.5 349v3M670.5 355v3M670.5 361v3M670.5 367v3M670.5 373v3M670.5 379v3M670.5 385v3M670.5 391v3M690.5 343v3M690.5 349v3M690.5 355v3M690.5 361v3M690.5 367v3M690.5 373v3M690.5 379v3M690.5 385v3M690.5 391v3M710.5 343v3M710.5 349v3M710.5 355v3M710.5 361v3M710.5 367v3M710.5 373v3M710.5 379v3M710.5 385v3M710.5 391v3M730.5 343v3M730.5 349v3M730.5 355v3M730.5 361v3M730.5 367v3M730.5 373v3M730.5 379v3M730.5 385v3M730.5 391v3M750.5 343v3M750.5 349v3M750.5 355v3M750.5 361v3M750.5 367v3M750.5 373v3M750.5 379v3M750.5 385v3M750.5 391v3M791.5 343v3M791.5 349v3M791.5 355v3M791.5 361v3M791.5 367v3M791.5 373v3M791.5 379v3M791.5 385v3M791.5 391v3M811.5 343v3M811.5 349v3M811.5 355v3M811.5 361v3M811.5 367v3M811.5 373v3M811.5 379v3M811.5 385v3M811.5 391v3M831.5 343v3M831.5 349v3M831.5 355v3M831.5 361v3M831.5 367v3M831.5 373v3M831.5 379v3M831.5 385v3M831.5 391v3M851.5 343v3M851.5 349v3M851.5 355v3M851.5 361v3M851.5 367v3M851.5 373v3M851.5 379v3M851.5 385v3M851.5 391v3M871.5 343v3M871.5 349v3M871.5 355v3M871.5 361v3M871.5 367v3M871.5 373v3M871.5 379v3M871.5 385v3M871.5 391v3M18 45.5h2M23 45.5h3M29 45.5h3M35 45.5h3M41 45.5h3M47 45.5h3M53 45.5h3M59 45.5h3M65 45.5h3M71 45.5h3M77 45.5h3M83 45.5h3M89 45.5h3M95 45.5h3M101 45.5h3M107 45.5h3M113 45.5h3M119 45.5h3M125 45.5h3M131 45.5h3M137 45.5h3M143 45.5h3M149 45.5h3M155 45.5h3M161 45.5h3M167 45.5h3M173 45.5h3M179 45.5h3M185 45.5h3M191 45.5h3M197 45.5h3M203 45.5h3M209 45.5h3M215 45.5h3M221 45.5h3M227 45.5h3M233 45.5h3M239 45.5h3M245 45.5h3M251 45.5h3M257 45.5h3M263 45.5h3M269 45.5h3M275 45.5h3M281 45.5h3M287 45.5h3M293 45.5h3M299 45.5h3M305 45.5h3M311 45.5h3M317 45.5h3M323 45.5h3M329 45.5h3M335 45.5h3M341 45.5h3M347 45.5h3M353 45.5h3M359 45.5h3M365 45.5h3M371 45.5h3M377 45.5h3M383 45.5h3M389 45.5h3M395 45.5h3M401 45.5h3M407 45.5h3M413 45.5h3M419 45.5h3M425 45.5h3M431 45.5h3M437 45.5h3M443 45.5h3M449 45.5h3M455 45.5h3M461 45.5h3M467 45.5h3M473 45.5h3M479 45.5h3M485 45.5h3M491 45.5h3M497 45.5h3M503 45.5h3M509 45.5h3M515 45.5h3M521 45.5h3M527 45.5h3M533 45.5h3M539 45.5h3M545 45.5h3M551 45.5h3M557 45.5h3M563 45.5h3M569 45.5h3M575 45.5h3M581 45.5h3M587 45.5h3M593 45.5h3M599 45.5h3M605 45.5h3M611 45.5h3M617 45.5h3M623 45.5h3M629 45.5h3M635 45.5h3M641 45.5h3M647 45.5h3M653 45.5h3M659 45.5h3M665 45.5h3M671 45.5h3M677 45.5h3M683 45.5h3M689 45.5h3M695 45.5h3M701 45.5h3M707 45.5h3M713 45.5h3M719 45.5h3M725 45.5h3M731 45.5h3M737 45.5h3M743 45.5h3M749 45.5h3M755 45.5h3M761 45.5h3M767 45.5h3M773 45.5h3M779 45.5h3M785 45.5h3M791 45.5h3M797 45.5h3M803 45.5h3M809 45.5h3M815 45.5h3M821 45.5h3M827 45.5h3M833 45.5h3M839 45.5h3M845 45.5h3M851 45.5h3M857 45.5h3M863 45.5h3M869 45.5h3M875 45.5h3M881 45.5h3M887 45.5h1M18 89.5h2M23 89.5h3M29 89.5h3M35 89.5h3M41 89.5h3M47 89.5h3M53 89.5h3M59 89.5h3M65 89.5h3M71 89.5h3M77 89.5h3M83 89.5h3M89 89.5h3M95 89.5h3M101 89.5h3M107 89.5h3M113 89.5h3M119 89.5h3M125 89.5h3M131 89.5h3M137 89.5h3M143 89.5h3M149 89.5h3M155 89.5h3M161 89.5h3M167 89.5h3M173 89.5h3M179 89.5h3M185 89.5h3M191 89.5h3M197 89.5h3M203 89.5h3M209 89.5h3M215 89.5h3M221 89.5h3M227 89.5h3M233 89.5h3M239 89.5h3M245 89.5h3M251 89.5h3M257 89.5h3M263 89.5h3M269 89.5h3M275 89.5h3M281 89.5h3M287 89.5h3M293 89.5h3M299 89.5h3M305 89.5h3M311 89.5h3M317 89.5h3M323 89.5h3M329 89.5h3M335 89.5h3M341 89.5h3M347 89.5h3M353 89.5h3M359 89.5h3M365 89.5h3M371 89.5h3M377 89.5h3M383 89.5h3M389 89.5h3M395 89.5h3M401 89.5h3M407 89.5h3M413 89.5h3M419 89.5h3M425 89.5h3M431 89.5h3M437 89.5h3M443 89.5h3M449 89.5h3M455 89.5h3M461 89.5h3M467 89.5h3M473 89.5h3M479 89.5h3M485 89.5h3M491 89.5h3M497 89.5h3M503 89.5h3M509 89.5h3M515 89.5h3M521 89.5h3M527 89.5h3M533 89.5h3M539 89.5h3M545 89.5h3M551 89.5h3M557 89.5h3M563 89.5h3M569 89.5h3M575 89.5h3M581 89.5h3M587 89.5h3M593 89.5h3M599 89.5h3M605 89.5h3M611 89.5h3M617 89.5h3M623 89.5h3M629 89.5h3M635 89.5h3M641 89.5h3M647 89.5h3M653 89.5h3M659 89.5h3M665 89.5h3M671 89.5h3M677 89.5h3M683 89.5h3M689 89.5h3M695 89.5h3M701 89.5h3M707 89.5h3M713 89.5h3M719 89.5h3M725 89.5h3M731 89.5h3M737 89.5h3M743 89.5h3M749 89.5h3M755 89.5h3M761 89.5h3M767 89.5h3M773 89.5h3M779 89.5h3M785 89.5h3M791 89.5h3M797 89.5h3M803 89.5h3M809 89.5h3M815 89.5h3M821 89.5h3M827 89.5h3M833 89.5h3M839 89.5h3M845 89.5h3M851 89.5h3M857 89.5h3M863 89.5h3M869 89.5h3M875 89.5h3M881 89.5h3M887 89.5h1M18 133.5h2M23 133.5h3M29 133.5h3M35 133.5h3M41 133.5h3M47 133.5h3M53 133.5h3M59 133.5h3M65 133.5h3M71 133.5h3M77 133.5h3M83 133.5h3M89 133.5h3M95 133.5h3M101 133.5h3M107 133.5h3M113 133.5h3M119 133.5h3M125 133.5h3M131 133.5h3M137 133.5h3M143 133.5h3M149 133.5h3M155 133.5h3M161 133.5h3M167 133.5h3M173 133.5h3M179 133.5h3M185 133.5h3M191 133.5h3M197 133.5h3M203 133.5h3M209 133.5h3M215 133.5h3M221 133.5h3M227 133.5h3M233 133.5h3M239 133.5h3M245 133.5h3M251 133.5h3M257 133.5h3M263 133.5h3M269 133.5h3M275 133.5h3M281 133.5h3M287 133.5h3M293 133.5h3M299 133.5h3M305 133.5h3M311 133.5h3M317 133.5h3M323 133.5h3M329 133.5h3M335 133.5h3M341 133.5h3M347 133.5h3M353 133.5h3M359 133.5h3M365 133.5h3M371 133.5h3M377 133.5h3M383 133.5h3M389 133.5h3M395 133.5h3M401 133.5h3M407 133.5h3M413 133.5h3M419 133.5h3M425 133.5h3M431 133.5h3M437 133.5h3M443 133.5h3M449 133.5h3M455 133.5h3M461 133.5h3M467 133.5h3M473 133.5h3M479 133.5h3M485 133.5h3M491 133.5h3M497 133.5h3M503 133.5h3M509 133.5h3M515 133.5h3M521 133.5h3M527 133.5h3M533 133.5h3M539 133.5h3M545 133.5h3M551 133.5h3M557 133.5h3M563 133.5h3M569 133.5h3M575 133.5h3M581 133.5h3M587 133.5h3M593 133.5h3M599 133.5h3M605 133.5h3M611 133.5h3M617 133.5h3M623 133.5h3M629 133.5h3M635 133.5h3M641 133.5h3M647 133.5h3M653 133.5h3M659 133.5h3M665 133.5h3M671 133.5h3M677 133.5h3M683 133.5h3M689 133.5h3M695 133.5h3M701 133.5h3M707 133.5h3M713 133.5h3M719 133.5h3M725 133.5h3M731 133.5h3M737 133.5h3M743 133.5h3M749 133.5h3M755 133.5h3M761 133.5h3M767 133.5h3M773 133.5h3M779 133.5h3M785 133.5h3M791 133.5h3M797 133.5h3M803 133.5h3M809 133.5h3M815 133.5h3M821 133.5h3M827 133.5h3M833 133.5h3M839 133.5h3M845 133.5h3M851 133.5h3M857 133.5h3M863 133.5h3M869 133.5h3M875 133.5h3M881 133.5h3M887 133.5h1M18 177.5h2M23 177.5h3M29 177.5h3M35 177.5h3M41 177.5h3M47 177.5h3M53 177.5h3M59 177.5h3M65 177.5h3M71 177.5h3M77 177.5h3M83 177.5h3M89 177.5h3M95 177.5h3M101 177.5h3M107 177.5h3M113 177.5h3M119 177.5h3M125 177.5h3M131 177.5h3M137 177.5h3M143 177.5h3M149 177.5h3M155 177.5h3M161 177.5h3M167 177.5h3M173 177.5h3M179 177.5h3M185 177.5h3M191 177.5h3M197 177.5h3M203 177.5h3M209 177.5h3M215 177.5h3M221 177.5h3M227 177.5h3M233 177.5h3M239 177.5h3M245 177.5h3M251 177.5h3M257 177.5h3M263 177.5h3M269 177.5h3M275 177.5h3M281 177.5h3M287 177.5h3M293 177.5h3M299 177.5h3M305 177.5h3M311 177.5h3M317 177.5h3M323 177.5h3M329 177.5h3M335 177.5h3M341 177.5h3M347 177.5h3M353 177.5h3M359 177.5h3M365 177.5h3M371 177.5h3M377 177.5h3M383 177.5h3M389 177.5h3M395 177.5h3M401 177.5h3M407 177.5h3M413 177.5h3M419 177.5h3M425 177.5h3M431 177.5h3M437 177.5h3M443 177.5h3M449 177.5h3M455 177.5h3M461 177.5h3M467 177.5h3M473 177.5h3M479 177.5h3M485 177.5h3M491 177.5h3M497 177.5h3M503 177.5h3M509 177.5h3M515 177.5h3M521 177.5h3M527 177.5h3M533 177.5h3M539 177.5h3M545 177.5h3M551 177.5h3M557 177.5h3M563 177.5h3M569 177.5h3M575 177.5h3M581 177.5h3M587 177.5h3M593 177.5h3M599 177.5h3M605 177.5h3M611 177.5h3M617 177.5h3M623 177.5h3M629 177.5h3M635 177.5h3M641 177.5h3M647 177.5h3M653 177.5h3M659 177.5h3M665 177.5h3M671 177.5h3M677 177.5h3M683 177.5h3M689 177.5h3M695 177.5h3M701 177.5h3M707 177.5h3M713 177.5h3M719 177.5h3M725 177.5h3M731 177.5h3M737 177.5h3M743 177.5h3M749 177.5h3M755 177.5h3M761 177.5h3M767 177.5h3M773 177.5h3M779 177.5h3M785 177.5h3M791 177.5h3M797 177.5h3M803 177.5h3M809 177.5h3M815 177.5h3M821 177.5h3M827 177.5h3M833 177.5h3M839 177.5h3M845 177.5h3M851 177.5h3M857 177.5h3M863 177.5h3M869 177.5h3M875 177.5h3M881 177.5h3M887 177.5h1M18 220.5h2M23 220.5h3M29 220.5h3M35 220.5h3M41 220.5h3M47 220.5h3M53 220.5h3M59 220.5h3M65 220.5h3M71 220.5h3M77 220.5h3M83 220.5h3M89 220.5h3M95 220.5h3M101 220.5h3M107 220.5h3M113 220.5h3M119 220.5h3M125 220.5h3M131 220.5h3M137 220.5h3M143 220.5h3M149 220.5h3M155 220.5h3M161 220.5h3M167 220.5h3M173 220.5h3M179 220.5h3M185 220.5h3M191 220.5h3M197 220.5h3M203 220.5h3M209 220.5h3M215 220.5h3M221 220.5h3M227 220.5h3M233 220.5h3M239 220.5h3M245 220.5h3M251 220.5h3M257 220.5h3M263 220.5h3M269 220.5h3M275 220.5h3M281 220.5h3M287 220.5h3M293 220.5h3M299 220.5h3M305 220.5h3M311 220.5h3M317 220.5h3M323 220.5h3M329 220.5h3M335 220.5h3M341 220.5h3M347 220.5h3M353 220.5h3M359 220.5h3M365 220.5h3M371 220.5h3M377 220.5h3M383 220.5h3M389 220.5h3M395 220.5h3M401 220.5h3M407 220.5h3M413 220.5h3M419 220.5h3M425 220.5h3M431 220.5h3M437 220.5h3M443 220.5h3M449 220.5h3M455 220.5h3M461 220.5h3M467 220.5h3M473 220.5h3M479 220.5h3M485 220.5h3M491 220.5h3M497 220.5h3M503 220.5h3M509 220.5h3M515 220.5h3M521 220.5h3M527 220.5h3M533 220.5h3M539 220.5h3M545 220.5h3M551 220.5h3M557 220.5h3M563 220.5h3M569 220.5h3M575 220.5h3M581 220.5h3M587 220.5h3M593 220.5h3M599 220.5h3M605 220.5h3M611 220.5h3M617 220.5h3M623 220.5h3M629 220.5h3M635 220.5h3M641 220.5h3M647 220.5h3M653 220.5h3M659 220.5h3M665 220.5h3M671 220.5h3M677 220.5h3M683 220.5h3M689 220.5h3M695 220.5h3M701 220.5h3M707 220.5h3M713 220.5h3M719 220.5h3M725 220.5h3M731 220.5h3M737 220.5h3M743 220.5h3M749 220.5h3M755 220.5h3M761 220.5h3M767 220.5h3M773 220.5h3M779 220.5h3M785 220.5h3M791 220.5h3M797 220.5h3M803 220.5h3M809 220.5h3M815 220.5h3M821 220.5h3M827 220.5h3M833 220.5h3M839 220.5h3M845 220.5h3M851 220.5h3M857 220.5h3M863 220.5h3M869 220.5h3M875 220.5h3M881 220.5h3M887 220.5h1M18 264.5h2M23 264.5h3M29 264.5h3M35 264.5h3M41 264.5h3M47 264.5h3M53 264.5h3M59 264.5h3M65 264.5h3M71 264.5h3M77 264.5h3M83 264.5h3M89 264.5h3M95 264.5h3M101 264.5h3M107 264.5h3M113 264.5h3M119 264.5h3M125 264.5h3M131 264.5h3M137 264.5h3M143 264.5h3M149 264.5h3M155 264.5h3M161 264.5h3M167 264.5h3M173 264.5h3M179 264.5h3M185 264.5h3M191 264.5h3M197 264.5h3M203 264.5h3M209 264.5h3M215 264.5h3M221 264.5h3M227 264.5h3M233 264.5h3M239 264.5h3M245 264.5h3M251 264.5h3M257 264.5h3M263 264.5h3M269 264.5h3M275 264.5h3M281 264.5h3M287 264.5h3M293 264.5h3M299 264.5h3M305 264.5h3M311 264.5h3M317 264.5h3M323 264.5h3M329 264.5h3M335 264.5h3M341 264.5h3M347 264.5h3M353 264.5h3M359 264.5h3M365 264.5h3M371 264.5h3M377 264.5h3M383 264.5h3M389 264.5h3M395 264.5h3M401 264.5h3M407 264.5h3M413 264.5h3M419 264.5h3M425 264.5h3M431 264.5h3M437 264.5h3M443 264.5h3M449 264.5h3M455 264.5h3M461 264.5h3M467 264.5h3M473 264.5h3M479 264.5h3M485 264.5h3M491 264.5h3M497 264.5h3M503 264.5h3M509 264.5h3M515 264.5h3M521 264.5h3M527 264.5h3M533 264.5h3M539 264.5h3M545 264.5h3M551 264.5h3M557 264.5h3M563 264.5h3M569 264.5h3M575 264.5h3M581 264.5h3M587 264.5h3M593 264.5h3M599 264.5h3M605 264.5h3M611 264.5h3M617 264.5h3M623 264.5h3M629 264.5h3M635 264.5h3M641 264.5h3M647 264.5h3M653 264.5h3M659 264.5h3M665 264.5h3M671 264.5h3M677 264.5h3M683 264.5h3M689 264.5h3M695 264.5h3M701 264.5h3M707 264.5h3M713 264.5h3M719 264.5h3M725 264.5h3M731 264.5h3M737 264.5h3M743 264.5h3M749 264.5h3M755 264.5h3M761 264.5h3M767 264.5h3M773 264.5h3M779 264.5h3M785 264.5h3M791 264.5h3M797 264.5h3M803 264.5h3M809 264.5h3M815 264.5h3M821 264.5h3M827 264.5h3M833 264.5h3M839 264.5h3M845 264.5h3M851 264.5h3M857 264.5h3M863 264.5h3M869 264.5h3M875 264.5h3M881 264.5h3M887 264.5h1M18 287.5h2M23 287.5h3M29 287.5h3M35 287.5h3M41 287.5h3M47 287.5h3M53 287.5h3M59 287.5h3M65 287.5h3M71 287.5h3M77 287.5h3M83 287.5h3M89 287.5h3M95 287.5h3M101 287.5h3M107 287.5h3M113 287.5h3M119 287.5h3M125 287.5h3M131 287.5h3M137 287.5h3M143 287.5h3M149 287.5h3M155 287.5h3M161 287.5h3M167 287.5h3M173 287.5h3M179 287.5h3M185 287.5h3M191 287.5h3M197 287.5h3M203 287.5h3M209 287.5h3M215 287.5h3M221 287.5h3M227 287.5h3M233 287.5h3M239 287.5h3M245 287.5h3M251 287.5h3M257 287.5h3M263 287.5h3M269 287.5h3M275 287.5h3M281 287.5h3M287 287.5h3M293 287.5h3M299 287.5h3M305 287.5h3M311 287.5h3M317 287.5h3M323 287.5h3M329 287.5h3M335 287.5h3M341 287.5h3M347 287.5h3M353 287.5h3M359 287.5h3M365 287.5h3M371 287.5h3M377 287.5h3M383 287.5h3M389 287.5h3M395 287.5h3M401 287.5h3M407 287.5h3M413 287.5h3M419 287.5h3M425 287.5h3M431 287.5h3M437 287.5h3M443 287.5h3M449 287.5h3M455 287.5h3M461 287.5h3M467 287.5h3M473 287.5h3M479 287.5h3M485 287.5h3M491 287.5h3M497 287.5h3M503 287.5h3M509 287.5h3M515 287.5h3M521 287.5h3M527 287.5h3M533 287.5h3M539 287.5h3M545 287.5h3M551 287.5h3M557 287.5h3M563 287.5h3M569 287.5h3M575 287.5h3M581 287.5h3M587 287.5h3M593 287.5h3M599 287.5h3M605 287.5h3M611 287.5h3M617 287.5h3M623 287.5h3M629 287.5h3M635 287.5h3M641 287.5h3M647 287.5h3M653 287.5h3M659 287.5h3M665 287.5h3M671 287.5h3M677 287.5h3M683 287.5h3M689 287.5h3M695 287.5h3M701 287.5h3M707 287.5h3M713 287.5h3M719 287.5h3M725 287.5h3M731 287.5h3M737 287.5h3M743 287.5h3M749 287.5h3M755 287.5h3M761 287.5h3M767 287.5h3M773 287.5h3M779 287.5h3M785 287.5h3M791 287.5h3M797 287.5h3M803 287.5h3M809 287.5h3M815 287.5h3M821 287.5h3M827 287.5h3M833 287.5h3M839 287.5h3M845 287.5h3M851 287.5h3M857 287.5h3M863 287.5h3M869 287.5h3M875 287.5h3M881 287.5h3M887 287.5h1M18 314.5h2M23 314.5h3M29 314.5h3M35 314.5h3M41 314.5h3M47 314.5h3M53 314.5h3M59 314.5h3M65 314.5h3M71 314.5h3M77 314.5h3M83 314.5h3M89 314.5h3M95 314.5h3M101 314.5h3M107 314.5h3M113 314.5h3M119 314.5h3M125 314.5h3M131 314.5h3M137 314.5h3M143 314.5h3M149 314.5h3M155 314.5h3M161 314.5h3M167 314.5h3M173 314.5h3M179 314.5h3M185 314.5h3M191 314.5h3M197 314.5h3M203 314.5h3M209 314.5h3M215 314.5h3M221 314.5h3M227 314.5h3M233 314.5h3M239 314.5h3M245 314.5h3M251 314.5h3M257 314.5h3M263 314.5h3M269 314.5h3M275 314.5h3M281 314.5h3M287 314.5h3M293 314.5h3M299 314.5h3M305 314.5h3M311 314.5h3M317 314.5h3M323 314.5h3M329 314.5h3M335 314.5h3M341 314.5h3M347 314.5h3M353 314.5h3M359 314.5h3M365 314.5h3M371 314.5h3M377 314.5h3M383 314.5h3M389 314.5h3M395 314.5h3M401 314.5h3M407 314.5h3M413 314.5h3M419 314.5h3M425 314.5h3M431 314.5h3M437 314.5h3M443 314.5h3M449 314.5h3M455 314.5h3M461 314.5h3M467 314.5h3M473 314.5h3M479 314.5h3M485 314.5h3M491 314.5h3M497 314.5h3M503 314.5h3M509 314.5h3M515 314.5h3M521 314.5h3M527 314.5h3M533 314.5h3M539 314.5h3M545 314.5h3M551 314.5h3M557 314.5h3M563 314.5h3M569 314.5h3M575 314.5h3M581 314.5h3M587 314.5h3M593 314.5h3M599 314.5h3M605 314.5h3M611 314.5h3M617 314.5h3M623 314.5h3M629 314.5h3M635 314.5h3M641 314.5h3M647 314.5h3M653 314.5h3M659 314.5h3M665 314.5h3M671 314.5h3M677 314.5h3M683 314.5h3M689 314.5h3M695 314.5h3M701 314.5h3M707 314.5h3M713 314.5h3M719 314.5h3M725 314.5h3M731 314.5h3M737 314.5h3M743 314.5h3M749 314.5h3M755 314.5h3M761 314.5h3M767 314.5h3M773 314.5h3M779 314.5h3M785 314.5h3M791 314.5h3M797 314.5h3M803 314.5h3M809 314.5h3M815 314.5h3M821 314.5h3M827 314.5h3M833 314.5h3M839 314.5h3M845 314.5h3M851 314.5h3M857 314.5h3M863 314.5h3M869 314.5h3M875 314.5h3M881 314.5h3M887 314.5h1M18 373.5h2M23 373.5h3M29 373.5h3M35 373.5h3M41 373.5h3M47 373.5h3M53 373.5h3M59 373.5h3M65 373.5h3M71 373.5h3M77 373.5h3M83 373.5h3M89 373.5h3M95 373.5h3M101 373.5h3M107 373.5h3M113 373.5h3M119 373.5h3M125 373.5h3M131 373.5h3M137 373.5h3M143 373.5h3M149 373.5h3M155 373.5h3M161 373.5h3M167 373.5h3M173 373.5h3M179 373.5h3M185 373.5h3M191 373.5h3M197 373.5h3M203 373.5h3M209 373.5h3M215 373.5h3M221 373.5h3M227 373.5h3M233 373.5h3M239 373.5h3M245 373.5h3M251 373.5h3M257 373.5h3M263 373.5h3M269 373.5h3M275 373.5h3M281 373.5h3M287 373.5h3M293 373.5h3M299 373.5h3M305 373.5h3M311 373.5h3M317 373.5h3M323 373.5h3M329 373.5h3M335 373.5h3M341 373.5h3M347 373.5h3M353 373.5h3M359 373.5h3M365 373.5h3M371 373.5h3M377 373.5h3M383 373.5h3M389 373.5h3M395 373.5h3M401 373.5h3M407 373.5h3M413 373.5h3M419 373.5h3M425 373.5h3M431 373.5h3M437 373.5h3M443 373.5h3M449 373.5h3M455 373.5h3M461 373.5h3M467 373.5h3M473 373.5h3M479 373.5h3M485 373.5h3M491 373.5h3M497 373.5h3M503 373.5h3M509 373.5h3M515 373.5h3M521 373.5h3M527 373.5h3M533 373.5h3M539 373.5h3M545 373.5h3M551 373.5h3M557 373.5h3M563 373.5h3M569 373.5h3M575 373.5h3M581 373.5h3M587 373.5h3M593 373.5h3M599 373.5h3M605 373.5h3M611 373.5h3M617 373.5h3M623 373.5h3M629 373.5h3M635 373.5h3M641 373.5h3M647 373.5h3M653 373.5h3M659 373.5h3M665 373.5h3M671 373.5h3M677 373.5h3M683 373.5h3M689 373.5h3M695 373.5h3M701 373.5h3M707 373.5h3M713 373.5h3M719 373.5h3M725 373.5h3M731 373.5h3M737 373.5h3M743 373.5h3M749 373.5h3M755 373.5h3M761 373.5h3M767 373.5h3M773 373.5h3M779 373.5h3M785 373.5h3M791 373.5h3M797 373.5h3M803 373.5h3M809 373.5h3M815 373.5h3M821 373.5h3M827 373.5h3M833 373.5h3M839 373.5h3M845 373.5h3M851 373.5h3M857 373.5h3M863 373.5h3M869 373.5h3M875 373.5h3M881 373.5h3M887 373.5h1" stroke="#67717d" stroke-width="1" fill="none" shape-rendering="crispEdges"/>
<rect x="330" y="37" width="1" height="239" fill="#8c9cac"/>
<rect x="330" y="282" width="1" height="53" fill="#8c9cac"/>
<rect x="330" y="341" width="1" height="56" fill="#8c9cac"/>
<rect x="771" y="37" width="1" height="239" fill="#8c9cac"/>
<rect x="771" y="282" width="1" height="53" fill="#8c9cac"/>
<rect x="771" y="341" width="1" height="56" fill="#8c9cac"/>
<rect x="17.5" y="37.5" width="871" height="239" fill="none" stroke="#b6c6d6" stroke-width="1" shape-rendering="crispEdges"/>
<rect x="17.5" y="282.5" width="871" height="53" fill="none" stroke="#b6c6d6" stroke-width="1" shape-rendering="crispEdges"/>
<rect x="17.5" y="341.5" width="871" height="56" fill="none" stroke="#b6c6d6" stroke-width="1" shape-rendering="crispEdges"/>
<path d="M29.5 398v3M49.5 398v3M69.5 398v3M89.5 398v3M109.5 398v3M129.5 398v3M149.5 398v3M169.5 398v3M189.5 398v3M209.5 398v3M229.5 398v3M249.5 398v3M269.5 398v3M289.5 398v3M309.5 398v3M330.5 398v3M350.5 398v3M370.5 398v3M390.5 398v3M410.5 398v3M430.5 398v3M450.5 398v3M470.5 398v3M490.5 398v3M510.5 398v3M530.5 398v3M550.5 398v3M570.5 398v3M590.5 398v3M610.5 398v3M630.5 398v3M650.5 398v3M670.5 398v3M690.5 398v3M710.5 398v3M730.5 398v3M750.5 398v3M771.5 398v3M791.5 398v3M811.5 398v3M831.5 398v3M851.5 398v3M871.5 398v3M889 45.5h3M889 89.5h3M889 133.5h3M889 177.5h3M889 220.5h3M889 264.5h3M889 287.5h3M889 314.5h3M889 373.5h3" stroke="#b6c6d6" stroke-width="1" shape-rendering="crispEdges"/>
<clipPath id="cp"><rect x="18" y="38" width="870" height="238"/></clipPath>
<g clip-path="url(#cp)">
<path d="M20.5 291V292M23.5 274V288M23.5 292V302M27.5 292V293M30.5 285V286M30.5 290V298M33.5 289V290M33.5 292V294M37.5 292V302M40.5 288V290M43.5 285V290M43.5 292V294M47.5 282V290M47.5 292V294M50.5 286V288M50.5 290V294M53.5 278V288M57.5 280V288M57.5 291V296M60.5 285V291M60.5 293V297M63.5 269V289M67.5 278V288M67.5 291V294M70.5 284V290M70.5 292V295M74.5 281V289M74.5 291V296M77.5 282V288M77.5 290V295M80.5 266V272M80.5 275V283M84.5 264V272M84.5 276V280M87.5 266V272M87.5 289V299M90.5 287V288M90.5 292V295M94.5 292V295M97.5 285V291M97.5 293V296M100.5 287V291M104.5 281V291M104.5 293V294M107.5 287V290M107.5 292V294M110.5 284V290M110.5 292V293M114.5 285V288M114.5 291V293M117.5 286V289M117.5 292V297M120.5 287V292M120.5 294V296M124.5 286V288M124.5 292V294M127.5 285V287M127.5 289V292M130.5 278V286M130.5 289V293M134.5 286V288M134.5 291V299M137.5 293V299M140.5 269V277M140.5 293V298M144.5 254V262M144.5 290V296M147.5 257V258M147.5 261V263M150.5 243V253M154.5 239V247M154.5 253V254M157.5 246V247M157.5 249V251M160.5 230V244M160.5 249V252M164.5 238V244M164.5 253V254M167.5 239V245M167.5 252V258M170.5 243V244M170.5 247V251M174.5 245V247M174.5 249V257M177.5 228V236M177.5 247V251M180.5 236V244M184.5 219V230M184.5 233V234M187.5 226V230M187.5 232V234M191.5 221V229M191.5 231V239M194.5 227V229M194.5 233V235M197.5 231V233M197.5 235V237M201.5 216V230M204.5 225V231M204.5 241V244M207.5 232V236M207.5 241V247M211.5 233V237M211.5 246V250M214.5 239V245M214.5 247V249M217.5 235V245M221.5 256V257M221.5 262V263M224.5 261V263M224.5 266V272M227.5 262V266M227.5 268V269M231.5 262V267M231.5 269V275M234.5 263V265M234.5 267V269M237.5 254V264M237.5 267V276M241.5 265V267M241.5 269V279M244.5 262V266M244.5 268V270M247.5 265V266M251.5 255V260M251.5 264V266M254.5 250V253M254.5 260V262M257.5 231V241M257.5 253V257M261.5 232V234M264.5 228V234M264.5 236V246M267.5 224V232M267.5 236V238M271.5 233V239M274.5 229V231M274.5 237V239M277.5 228V229M277.5 237V245M281.5 205V224M281.5 229V250M284.5 221V222M284.5 224V232M288.5 221V222M291.5 212V213M291.5 215V221M294.5 201V211M294.5 216V224M298.5 197V205M298.5 211V219M301.5 202V204M301.5 206V214M304.5 192V195M304.5 205V213M308.5 177V183M308.5 194V196M311.5 168V172M311.5 183V184M314.5 167V169M314.5 172V175M318.5 163V165M318.5 169V173M321.5 156V162M321.5 166V168M324.5 155V161M324.5 170V172M328.5 168V170M328.5 172V177M331.5 163V168M331.5 170V172M334.5 157V161M338.5 162V167M341.5 152V160M341.5 162V163M344.5 157V159M344.5 161V162M348.5 156V158M348.5 160V163M351.5 156V159M351.5 164V169M354.5 143V153M354.5 165V171M358.5 154V156M361.5 152V153M364.5 141V143M364.5 145V146M368.5 142V146M371.5 131V134M371.5 139V149M374.5 126V128M374.5 139V140M378.5 126V128M378.5 135V137M381.5 126V134M381.5 136V138M384.5 122V124M384.5 134V137M388.5 107V121M388.5 123V126M391.5 111V119M391.5 121V129M394.5 117V119M394.5 130V136M398.5 114V119M398.5 131V137M401.5 100V101M401.5 128V136M405.5 61V77M405.5 116V118M408.5 68V70M408.5 78V83M411.5 69V71M415.5 62V65M415.5 79V84M418.5 51V64M418.5 71V76M421.5 69V72M421.5 87V97M425.5 76V82M425.5 86V88M428.5 79V82M428.5 84V88M431.5 76V84M431.5 96V100M435.5 82V85M435.5 97V99M438.5 79V84M438.5 86V87M441.5 84V86M441.5 88V90M445.5 83V86M445.5 89V90M448.5 80V85M451.5 84V85M451.5 89V99M455.5 88V90M455.5 102V112M458.5 90V96M458.5 101V114M461.5 81V83M465.5 60V71M465.5 90V98M468.5 63V71M468.5 76V78M471.5 65V75M475.5 50V69M475.5 75V77M478.5 52V56M478.5 68V69M485.5 53V59M485.5 63V66M488.5 37V54M488.5 63V80M491.5 46V54M491.5 61V62M495.5 54V60M495.5 62V65M498.5 59V61M498.5 63V65M502.5 45V51M502.5 63V69M505.5 47V50M508.5 69V70M508.5 80V90M512.5 77V80M512.5 84V94M515.5 89V95M518.5 76V78M518.5 89V95M522.5 72V78M522.5 91V97M525.5 83V91M525.5 106V108M528.5 99V105M532.5 102V110M532.5 112V118M535.5 108V110M535.5 118V119M538.5 101V109M538.5 117V120M542.5 100V108M542.5 110V113M545.5 98V100M545.5 110V116M548.5 100V102M552.5 64V70M552.5 92V97M555.5 65V69M555.5 74V79M558.5 65V75M562.5 71V76M562.5 83V84M565.5 101V121M568.5 96V100M568.5 104V105M572.5 91V101M572.5 105V106M575.5 98V101M578.5 101V104M578.5 108V130M582.5 104V107M582.5 114V119M585.5 109V113M585.5 115V120M588.5 110V115M588.5 119V127M592.5 119V124M595.5 109V112M595.5 115V121M598.5 110V112M598.5 114V116M602.5 109V112M602.5 123V126M605.5 121V124M605.5 130V135M608.5 122V130M608.5 132V137M612.5 125V126M612.5 131V133M615.5 118V126M615.5 128V130M619.5 117V123M619.5 126V131M622.5 121V122M622.5 124V126M625.5 120V122M625.5 129V133M629.5 135V147M632.5 130V135M632.5 140V148M635.5 139V145M639.5 124V126M639.5 130V138M642.5 121V123M642.5 126V127M645.5 106V111M645.5 122V128M649.5 111V113M652.5 92V98M652.5 106V116M655.5 89V97M655.5 99V105M659.5 95V96M659.5 99V101M662.5 80V81M662.5 96V102M665.5 67V78M669.5 85V88M672.5 77V85M672.5 87V92M675.5 84V85M675.5 87V90M679.5 80V85M679.5 89V92M682.5 93V101M685.5 89V93M685.5 101V103M689.5 98V100M692.5 104V107M695.5 105V110M695.5 115V138M699.5 105V110M699.5 115V119M702.5 110V114M702.5 120V125M705.5 123V126M709.5 121V123M709.5 125V131M712.5 123V125M712.5 127V129M716.5 119V122M716.5 126V127M719.5 120V122M719.5 125V127M722.5 126V136M726.5 117V119M726.5 121V136M729.5 111V116M732.5 109V115M732.5 119V123M736.5 93V113M736.5 120V122M739.5 94V102M739.5 112V118M742.5 97V102M742.5 104V108M746.5 101V102M749.5 105V110M749.5 113V114M752.5 106V111M752.5 118V122M756.5 112V117M756.5 123V138M759.5 114V116M759.5 123V127M762.5 112V116M762.5 118V122M766.5 111V116M766.5 120V122M769.5 122V127M772.5 121V124M776.5 106V116M776.5 119V123M779.5 109V119M779.5 121V140M782.5 110V114M782.5 121V124M786.5 99V112M786.5 114V124M789.5 111V112M792.5 104V110M792.5 113V118M796.5 99V105M796.5 111V113M799.5 88V102M799.5 105V108M802.5 92V102M802.5 109V111M806.5 105V109M806.5 112V122M809.5 109V111M809.5 113V115M812.5 105V111M812.5 115V123M816.5 109V114M816.5 117V118M819.5 116V117M819.5 121V123M822.5 107V113M822.5 121V123M826.5 99V109M826.5 113V115M829.5 108V109M829.5 111V114M833.5 97V101M833.5 109V112M836.5 98V100M836.5 102V104M839.5 78V88M839.5 99V101M843.5 83V85M843.5 88V96M846.5 68V84M846.5 86V87M849.5 83V84M853.5 74V81M853.5 85V91M856.5 77V80M856.5 93V95M859.5 80V90M859.5 93V95M863.5 88V90M863.5 101V107M866.5 101V102M869.5 95V99M869.5 101V103M873.5 101V103M876.5 92V94" stroke="#f27c34" stroke-width="1" fill="none" shape-rendering="crispEdges"/>
<path d="M19 289h3V291h-3zM26 287h3V292h-3zM32 290h3V292h-3zM46 290h3V292h-3zM49 288h3V290h-3zM52 288h3V290h-3zM62 289h3V292h-3zM69 290h3V292h-3zM76 288h3V290h-3zM79 272h3V275h-3zM83 272h3V276h-3zM93 290h3V292h-3zM99 291h3V293h-3zM106 290h3V292h-3zM113 288h3V291h-3zM123 288h3V292h-3zM126 287h3V289h-3zM139 277h3V293h-3zM143 262h3V290h-3zM146 258h3V261h-3zM149 253h3V257h-3zM153 247h3V253h-3zM159 244h3V249h-3zM166 245h3V252h-3zM173 247h3V249h-3zM176 236h3V247h-3zM179 233h3V236h-3zM183 230h3V233h-3zM190 229h3V231h-3zM200 230h3V234h-3zM206 236h3V241h-3zM230 267h3V269h-3zM233 265h3V267h-3zM240 267h3V269h-3zM243 266h3V268h-3zM246 263h3V265h-3zM250 260h3V264h-3zM253 253h3V260h-3zM256 241h3V253h-3zM260 234h3V241h-3zM266 232h3V236h-3zM270 231h3V233h-3zM276 229h3V237h-3zM280 224h3V229h-3zM283 222h3V224h-3zM287 213h3V221h-3zM293 211h3V216h-3zM297 205h3V211h-3zM300 204h3V206h-3zM303 195h3V205h-3zM307 183h3V194h-3zM310 172h3V183h-3zM313 169h3V172h-3zM317 165h3V169h-3zM320 162h3V166h-3zM327 170h3V172h-3zM330 168h3V170h-3zM333 161h3V167h-3zM337 160h3V162h-3zM340 160h3V162h-3zM343 159h3V161h-3zM353 153h3V165h-3zM360 144h3V152h-3zM363 143h3V145h-3zM367 135h3V142h-3zM373 128h3V139h-3zM380 134h3V136h-3zM383 124h3V134h-3zM387 121h3V123h-3zM390 119h3V121h-3zM397 119h3V131h-3zM400 101h3V128h-3zM404 77h3V116h-3zM407 70h3V78h-3zM414 65h3V79h-3zM424 82h3V86h-3zM434 85h3V97h-3zM447 85h3V89h-3zM457 96h3V101h-3zM460 83h3V97h-3zM464 71h3V90h-3zM470 75h3V77h-3zM474 69h3V75h-3zM477 56h3V68h-3zM487 54h3V63h-3zM501 51h3V63h-3zM517 78h3V89h-3zM531 110h3V112h-3zM537 109h3V117h-3zM544 100h3V110h-3zM547 92h3V100h-3zM551 70h3V92h-3zM571 101h3V105h-3zM591 114h3V119h-3zM594 112h3V115h-3zM597 112h3V114h-3zM611 126h3V131h-3zM614 126h3V128h-3zM618 123h3V126h-3zM634 129h3V139h-3zM638 126h3V130h-3zM641 123h3V126h-3zM644 111h3V122h-3zM648 106h3V111h-3zM651 98h3V106h-3zM658 96h3V99h-3zM661 81h3V96h-3zM664 78h3V81h-3zM674 85h3V87h-3zM694 110h3V115h-3zM715 122h3V126h-3zM721 121h3V126h-3zM725 119h3V121h-3zM728 116h3V119h-3zM735 113h3V120h-3zM738 102h3V112h-3zM748 110h3V113h-3zM758 116h3V123h-3zM771 117h3V121h-3zM781 114h3V121h-3zM785 112h3V114h-3zM791 110h3V113h-3zM795 105h3V111h-3zM798 102h3V105h-3zM808 111h3V113h-3zM821 113h3V121h-3zM825 109h3V113h-3zM828 109h3V111h-3zM832 101h3V109h-3zM835 100h3V102h-3zM838 88h3V99h-3zM842 85h3V88h-3zM845 84h3V86h-3zM848 84h3V86h-3zM852 81h3V85h-3zM858 90h3V93h-3zM865 99h3V101h-3zM872 95h3V101h-3z" fill="#f6883c" shape-rendering="crispEdges"/>
<path d="M27 288h1V291h-1zM63 290h1V291h-1zM80 273h1V274h-1zM84 273h1V275h-1zM114 289h1V290h-1zM124 289h1V291h-1zM140 278h1V292h-1zM144 263h1V289h-1zM147 259h1V260h-1zM150 254h1V256h-1zM154 248h1V252h-1zM160 245h1V248h-1zM167 246h1V251h-1zM177 237h1V246h-1zM180 234h1V235h-1zM184 231h1V232h-1zM201 231h1V233h-1zM207 237h1V240h-1zM251 261h1V263h-1zM254 254h1V259h-1zM257 242h1V252h-1zM261 235h1V240h-1zM267 233h1V235h-1zM277 230h1V236h-1zM281 225h1V228h-1zM288 214h1V220h-1zM294 212h1V215h-1zM298 206h1V210h-1zM304 196h1V204h-1zM308 184h1V193h-1zM311 173h1V182h-1zM314 170h1V171h-1zM318 166h1V168h-1zM321 163h1V165h-1zM334 162h1V166h-1zM354 154h1V164h-1zM361 145h1V151h-1zM368 136h1V141h-1zM374 129h1V138h-1zM384 125h1V133h-1zM398 120h1V130h-1zM401 102h1V127h-1zM405 78h1V115h-1zM408 71h1V77h-1zM415 66h1V78h-1zM425 83h1V85h-1zM435 86h1V96h-1zM448 86h1V88h-1zM458 97h1V100h-1zM461 84h1V96h-1zM465 72h1V89h-1zM475 70h1V74h-1zM478 57h1V67h-1zM488 55h1V62h-1zM502 52h1V62h-1zM518 79h1V88h-1zM538 110h1V116h-1zM545 101h1V109h-1zM548 93h1V99h-1zM552 71h1V91h-1zM572 102h1V104h-1zM592 115h1V118h-1zM595 113h1V114h-1zM612 127h1V130h-1zM619 124h1V125h-1zM635 130h1V138h-1zM639 127h1V129h-1zM642 124h1V125h-1zM645 112h1V121h-1zM649 107h1V110h-1zM652 99h1V105h-1zM659 97h1V98h-1zM662 82h1V95h-1zM665 79h1V80h-1zM695 111h1V114h-1zM716 123h1V125h-1zM722 122h1V125h-1zM729 117h1V118h-1zM736 114h1V119h-1zM739 103h1V111h-1zM749 111h1V112h-1zM759 117h1V122h-1zM772 118h1V120h-1zM782 115h1V120h-1zM792 111h1V112h-1zM796 106h1V110h-1zM799 103h1V104h-1zM822 114h1V120h-1zM826 110h1V112h-1zM833 102h1V108h-1zM839 89h1V98h-1zM843 86h1V87h-1zM853 82h1V84h-1zM859 91h1V92h-1zM873 96h1V100h-1z" fill="#ffb070" shape-rendering="crispEdges"/>
<path d="M22 288h3V292h-3zM23 289V291h1V289zM29 286h3V290h-3zM30 287V289h1V287zM36 290h3V292h-3zM37 291V291h1V291zM39 290h3V292h-3zM40 291V291h1V291zM42 290h3V292h-3zM43 291V291h1V291zM56 288h3V291h-3zM57 289V290h1V289zM59 291h3V293h-3zM60 292V292h1V292zM66 288h3V291h-3zM67 289V290h1V289zM73 289h3V291h-3zM74 290V290h1V290zM86 272h3V289h-3zM87 273V288h1V273zM89 288h3V292h-3zM90 289V291h1V289zM96 291h3V293h-3zM97 292V292h1V292zM103 291h3V293h-3zM104 292V292h1V292zM109 290h3V292h-3zM110 291V291h1V291zM116 289h3V292h-3zM117 290V291h1V290zM119 292h3V294h-3zM120 293V293h1V293zM129 286h3V289h-3zM130 287V288h1V287zM133 288h3V291h-3zM134 289V290h1V289zM136 291h3V293h-3zM137 292V292h1V292zM156 247h3V249h-3zM157 248V248h1V248zM163 244h3V253h-3zM164 245V252h1V245zM169 244h3V247h-3zM170 245V246h1V245zM186 230h3V232h-3zM187 231V231h1V231zM193 229h3V233h-3zM194 230V232h1V230zM196 233h3V235h-3zM197 234V234h1V234zM203 231h3V241h-3zM204 232V240h1V232zM210 237h3V246h-3zM211 238V245h1V238zM213 245h3V247h-3zM214 246V246h1V246zM216 245h3V257h-3zM217 246V256h1V246zM220 257h3V262h-3zM221 258V261h1V258zM223 263h3V266h-3zM224 264V265h1V264zM226 266h3V268h-3zM227 267V267h1V267zM236 264h3V267h-3zM237 265V266h1V265zM263 234h3V236h-3zM264 235V235h1V235zM273 231h3V237h-3zM274 232V236h1V232zM290 213h3V215h-3zM291 214V214h1V214zM323 161h3V170h-3zM324 162V169h1V162zM347 158h3V160h-3zM348 159V159h1V159zM350 159h3V164h-3zM351 160V163h1V160zM357 152h3V154h-3zM358 153V153h1V153zM370 134h3V139h-3zM371 135V138h1V135zM377 128h3V135h-3zM378 129V134h1V129zM393 119h3V130h-3zM394 120V129h1V120zM410 71h3V78h-3zM411 72V77h1V72zM417 64h3V71h-3zM418 65V70h1V65zM420 72h3V87h-3zM421 73V86h1V73zM427 82h3V84h-3zM428 83V83h1V83zM430 84h3V96h-3zM431 85V95h1V85zM437 84h3V86h-3zM438 85V85h1V85zM440 86h3V88h-3zM441 87V87h1V87zM444 86h3V89h-3zM445 87V88h1V87zM450 85h3V89h-3zM451 86V88h1V86zM454 90h3V102h-3zM455 91V101h1V91zM467 71h3V76h-3zM468 72V75h1V72zM480 56h3V59h-3zM481 57V58h1V57zM484 59h3V63h-3zM485 60V62h1V60zM490 54h3V61h-3zM491 55V60h1V55zM494 60h3V62h-3zM495 61V61h1V61zM497 61h3V63h-3zM498 62V62h1V62zM504 50h3V70h-3zM505 51V69h1V51zM507 70h3V80h-3zM508 71V79h1V71zM511 80h3V84h-3zM512 81V83h1V81zM514 83h3V89h-3zM515 84V88h1V84zM521 78h3V91h-3zM522 79V90h1V79zM524 91h3V106h-3zM525 92V105h1V92zM527 105h3V113h-3zM528 106V112h1V106zM534 110h3V118h-3zM535 111V117h1V111zM541 108h3V110h-3zM542 109V109h1V109zM554 69h3V74h-3zM555 70V73h1V70zM557 75h3V77h-3zM558 76V76h1V76zM561 76h3V83h-3zM562 77V82h1V77zM564 83h3V101h-3zM565 84V100h1V84zM567 100h3V104h-3zM568 101V103h1V101zM574 101h3V105h-3zM575 102V104h1V102zM577 104h3V108h-3zM578 105V107h1V105zM581 107h3V114h-3zM582 108V113h1V108zM584 113h3V115h-3zM585 114V114h1V114zM587 115h3V119h-3zM588 116V118h1V116zM601 112h3V123h-3zM602 113V122h1V113zM604 124h3V130h-3zM605 125V129h1V125zM607 130h3V132h-3zM608 131V131h1V131zM621 122h3V124h-3zM622 123V123h1V123zM624 122h3V129h-3zM625 123V128h1V123zM628 129h3V135h-3zM629 130V134h1V130zM631 135h3V140h-3zM632 136V139h1V136zM654 97h3V99h-3zM655 98V98h1V98zM668 77h3V85h-3zM669 78V84h1V78zM671 85h3V87h-3zM672 86V86h1V86zM678 85h3V89h-3zM679 86V88h1V86zM681 90h3V93h-3zM682 91V92h1V91zM684 93h3V101h-3zM685 94V100h1V94zM688 100h3V107h-3zM689 101V106h1V101zM691 107h3V115h-3zM692 108V114h1V108zM698 110h3V115h-3zM699 111V114h1V111zM701 114h3V120h-3zM702 115V119h1V115zM704 120h3V123h-3zM705 121V122h1V121zM708 123h3V125h-3zM709 124V124h1V124zM711 125h3V127h-3zM712 126V126h1V126zM718 122h3V125h-3zM719 123V124h1V123zM731 115h3V119h-3zM732 116V118h1V116zM741 102h3V104h-3zM742 103V103h1V103zM745 102h3V114h-3zM746 103V113h1V103zM751 111h3V118h-3zM752 112V117h1V112zM755 117h3V123h-3zM756 118V122h1V118zM761 116h3V118h-3zM762 117V117h1V117zM765 116h3V120h-3zM766 117V119h1V117zM768 120h3V122h-3zM769 121V121h1V121zM775 116h3V119h-3zM776 117V118h1V117zM778 119h3V121h-3zM779 120V120h1V120zM788 112h3V114h-3zM789 113V113h1V113zM801 102h3V109h-3zM802 103V108h1V103zM805 109h3V112h-3zM806 110V111h1V110zM811 111h3V115h-3zM812 112V114h1V112zM815 114h3V117h-3zM816 115V116h1V115zM818 117h3V121h-3zM819 118V120h1V118zM855 80h3V93h-3zM856 81V92h1V81zM862 90h3V101h-3zM863 91V100h1V91zM868 99h3V101h-3zM869 100V100h1V100zM875 94h3V105h-3zM876 95V104h1V95z" fill="#f07428" fill-rule="evenodd" shape-rendering="crispEdges"/>
<path d="M180.0,280.0C181.2,279.2 180.7,277.3 187.0,275.0C193.3,272.7 207.5,267.6 217.8,266.0C228.1,264.4 238.3,267.8 248.7,265.5C259.1,263.2 266.6,258.2 280.0,252.0C293.4,245.8 316.7,234.3 329.0,228.0C341.3,221.7 347.2,218.1 354.0,214.0C360.8,209.9 365.7,206.2 370.0,203.2C374.3,200.2 376.6,198.5 380.0,196.0C383.4,193.5 386.9,190.8 390.3,188.3C393.7,185.8 396.4,184.8 400.5,180.8C404.6,176.9 410.5,168.7 414.6,164.6C418.8,160.5 421.1,159.5 425.4,156.5C429.7,153.5 434.7,149.8 440.5,146.7C446.3,143.5 455.1,140.2 460.0,137.6C464.9,135.0 465.0,134.3 470.0,131.0C475.0,127.7 484.2,121.3 490.0,117.5C495.8,113.7 500.0,109.8 505.0,108.0C510.0,106.2 514.2,106.8 520.0,106.4C525.8,106.0 533.3,106.0 540.0,105.4C546.7,104.8 553.3,103.4 560.0,103.0C566.7,102.6 573.3,102.6 580.0,103.0C586.7,103.4 593.3,104.4 600.0,105.4C606.7,106.4 613.3,107.8 620.0,109.2C626.7,110.6 635.0,112.9 640.0,113.9C645.0,114.9 646.7,115.7 650.0,115.4C653.3,115.1 656.7,113.3 660.0,112.3C663.3,111.3 665.0,110.1 670.0,109.2C675.0,108.3 681.7,106.6 690.0,107.0C698.3,107.4 708.3,110.5 720.0,111.5C731.7,112.5 746.7,112.9 760.0,113.3C773.3,113.7 788.3,114.0 800.0,114.0C811.7,114.0 820.8,114.3 830.0,113.3C839.2,112.3 848.3,109.2 855.0,108.0C861.7,106.8 866.7,106.5 870.0,106.3C873.3,106.1 874.2,106.9 875.0,107.0" fill="none" stroke="#a82428" stroke-width="1.25" />
<path d="M160.0,280.0C161.0,279.3 162.7,278.7 166.0,276.0C169.3,273.3 174.0,268.5 180.0,264.0C186.0,259.5 195.7,251.3 202.0,249.0C208.3,246.7 213.1,249.0 217.8,250.0C222.5,251.0 224.8,253.5 230.0,255.0C235.2,256.5 244.4,258.5 248.7,259.0C253.0,259.5 252.4,259.5 256.0,258.0C259.6,256.5 266.0,252.1 270.0,250.0C274.0,247.9 274.2,250.0 280.0,245.5C285.8,241.0 296.5,230.4 304.7,223.0C312.9,215.6 321.2,207.9 329.4,201.0C337.6,194.1 345.6,188.4 354.0,181.4C362.4,174.4 374.1,164.3 380.0,159.0C385.9,153.7 386.3,152.0 389.7,149.4C393.1,146.8 397.8,146.4 400.5,143.5C403.2,140.6 403.4,136.4 406.0,132.0C408.6,127.6 412.1,120.9 415.8,117.0C419.5,113.1 424.0,110.5 428.0,108.5C432.0,106.5 436.3,105.8 440.0,104.8C443.7,103.8 446.7,103.1 450.0,102.3C453.3,101.5 455.0,102.1 460.0,100.0C465.0,97.9 474.3,92.9 480.0,89.7C485.7,86.5 490.0,83.4 494.0,81.0C498.0,78.6 500.7,76.0 504.0,75.5C507.3,75.0 511.0,77.1 514.0,78.0C517.0,78.9 519.3,79.7 522.0,81.0C524.7,82.3 526.5,83.9 530.0,86.0C533.5,88.1 538.8,93.0 543.0,93.4C547.2,93.8 551.3,89.2 555.0,88.4C558.7,87.6 561.7,87.8 565.0,88.4C568.3,89.1 570.8,90.2 575.0,92.3C579.2,94.4 585.8,98.9 590.0,100.8C594.2,102.7 596.7,102.4 600.0,103.8C603.3,105.2 606.7,107.4 610.0,109.2C613.3,111.0 616.7,112.7 620.0,114.6C623.3,116.5 626.7,119.5 630.0,120.8C633.3,122.1 636.7,122.7 640.0,122.4C643.3,122.2 646.7,120.4 650.0,119.3C653.3,118.2 656.7,117.7 660.0,116.0C663.3,114.3 666.7,111.2 670.0,109.0C673.3,106.8 676.7,104.1 680.0,103.0C683.3,101.9 686.7,102.0 690.0,102.5C693.3,103.0 696.3,104.5 700.0,106.0C703.7,107.5 707.8,109.8 712.0,111.5C716.2,113.2 720.3,115.7 725.0,116.0C729.7,116.3 734.2,113.2 740.0,113.3C745.8,113.4 754.2,115.9 760.0,116.8C765.8,117.7 770.8,118.5 775.0,118.5C779.2,118.5 781.7,117.7 785.0,116.8C788.3,115.9 791.7,113.9 795.0,113.3C798.3,112.7 799.2,113.0 805.0,113.3C810.8,113.6 823.3,115.9 830.0,115.0C836.7,114.1 840.0,110.3 845.0,108.0C850.0,105.7 855.8,102.4 860.0,101.0C864.2,99.6 867.5,99.6 870.0,99.4C872.5,99.2 874.2,99.9 875.0,100.0" fill="none" stroke="#1616c0" stroke-width="1.25" />
</g>
<rect x="18" y="86" width="870" height="1" fill="#86303a"/><rect x="18" y="87" width="870" height="1" fill="#b42c30"/>
<rect x="18" y="130" width="870" height="1" fill="#22882a"/><rect x="18" y="131" width="870" height="1" fill="#2cb42c"/>
<rect x="18" y="101" width="870" height="1" fill="#d4d8dc"/>
<clipPath id="cm"><rect x="18" y="283" width="870" height="52"/></clipPath>
<g clip-path="url(#cm)">
<path d="M142 314.5h73M317 314.5h108M500 314.5h120" stroke="#c83030" stroke-width="1.5" stroke-dasharray="2 3" shape-rendering="crispEdges"/>
<path d="M215 314.5h102M430 314.5h70M620 314.5h255" stroke="#c83030" stroke-width="1" stroke-dasharray="2 7" shape-rendering="crispEdges"/>
<path d="M18.0,319.0C37.8,318.8 112.8,320.0 137.0,318.0C161.2,316.0 152.7,309.6 163.0,307.0C173.3,304.4 189.5,303.3 199.0,302.6C208.5,301.9 213.5,301.8 220.0,303.0C226.5,304.2 232.8,308.7 238.0,310.0C243.2,311.3 245.7,311.3 251.0,310.7C256.3,310.1 263.1,307.6 269.6,306.6C276.1,305.7 284.9,305.3 290.0,305.0C295.1,304.7 295.5,305.9 300.0,304.7C304.5,303.5 311.8,299.3 317.0,298.0C322.2,296.7 323.0,297.8 331.0,297.0C339.0,296.2 355.2,294.5 365.0,293.5C374.8,292.5 383.3,291.4 390.0,291.0C396.7,290.6 401.8,291.8 405.0,291.0C408.2,290.2 404.8,287.4 409.0,286.5C413.2,285.6 422.3,285.1 430.0,285.7C437.7,286.3 449.8,288.9 455.0,290.0C460.2,291.1 458.5,292.2 461.0,292.5C463.5,292.8 463.5,291.9 470.0,291.7C476.5,291.4 493.7,290.6 500.0,291.0C506.3,291.4 502.3,292.0 508.0,294.3C513.7,296.6 527.5,302.6 534.0,304.7C540.5,306.8 541.0,306.1 547.0,306.8C553.0,307.5 562.8,307.6 570.0,308.6C577.2,309.6 585.0,311.9 590.0,312.6C595.0,313.3 593.5,311.9 600.0,313.0C606.5,314.1 620.7,318.4 629.0,319.0C637.3,319.6 642.2,317.8 650.0,316.5C657.8,315.2 670.3,312.2 676.0,311.2C681.7,310.3 680.2,310.4 684.0,310.7C687.8,311.0 692.2,312.0 699.0,313.0C705.8,314.0 717.2,316.0 725.0,316.5C732.8,317.0 735.2,316.4 746.0,316.0C756.8,315.6 775.2,314.3 790.0,314.0C804.8,313.7 825.8,314.4 835.0,314.0C844.2,313.6 842.5,312.4 845.0,311.8C847.5,311.2 845.2,310.7 850.0,310.5C854.8,310.3 870.0,310.5 874.0,310.5" fill="none" stroke="#c42828" stroke-width="1.3" />
<path d="M18.0,319.0C37.8,319.0 105.9,321.6 137.0,319.0C168.1,316.4 190.7,305.7 204.5,303.4C218.3,301.1 212.2,304.1 220.0,305.0C227.8,305.9 241.5,308.3 251.0,308.6C260.5,308.9 268.8,307.4 277.0,307.0C285.2,306.6 293.3,306.8 300.0,306.0C306.7,305.2 311.8,303.1 317.0,302.0C322.2,300.9 323.0,300.8 331.0,299.5C339.0,298.2 352.8,295.6 365.0,294.3C377.2,293.0 394.0,293.0 404.0,291.7C414.0,290.4 418.0,287.1 425.0,286.5C432.0,285.9 438.7,287.1 446.0,287.8C453.3,288.6 459.5,290.5 469.0,291.0C478.5,291.5 492.2,289.3 503.0,291.0C513.8,292.7 526.2,298.7 534.0,301.0C541.8,303.3 541.3,303.1 550.0,304.7C558.7,306.3 577.7,309.5 586.0,310.7C594.3,311.9 592.8,310.5 600.0,311.8C607.2,313.1 618.5,317.7 629.0,318.5C639.5,319.3 653.0,317.5 663.0,316.5C673.0,315.5 680.3,312.9 689.0,312.5C697.7,312.1 705.5,313.3 715.0,314.0C724.5,314.7 732.2,316.3 746.0,316.5C759.8,316.7 784.0,315.4 798.0,315.0C812.0,314.6 821.3,314.9 830.0,314.4C838.7,313.9 842.7,312.4 850.0,311.8C857.3,311.2 870.0,310.9 874.0,310.7" fill="none" stroke="#1e8a22" stroke-width="1.3" />
<path d="M18.0,319.0C37.8,318.8 112.8,320.0 137.0,318.0C161.2,316.0 152.7,309.6 163.0,307.0C173.3,304.4 189.5,303.3 199.0,302.6C208.5,301.9 213.5,301.8 220.0,303.0C226.5,304.2 232.8,308.7 238.0,310.0C243.2,311.3 245.7,311.3 251.0,310.7C256.3,310.1 263.1,307.6 269.6,306.6C276.1,305.7 284.9,305.3 290.0,305.0C295.1,304.7 295.5,305.9 300.0,304.7C304.5,303.5 311.8,299.3 317.0,298.0C322.2,296.7 323.0,297.8 331.0,297.0C339.0,296.2 355.2,294.5 365.0,293.5C374.8,292.5 383.3,291.4 390.0,291.0C396.7,290.6 401.8,291.8 405.0,291.0C408.2,290.2 404.8,287.4 409.0,286.5C413.2,285.6 422.3,285.1 430.0,285.7C437.7,286.3 449.8,288.9 455.0,290.0C460.2,291.1 458.5,292.2 461.0,292.5C463.5,292.8 463.5,291.9 470.0,291.7C476.5,291.4 493.7,290.6 500.0,291.0C506.3,291.4 502.3,292.0 508.0,294.3C513.7,296.6 527.5,302.6 534.0,304.7C540.5,306.8 541.0,306.1 547.0,306.8C553.0,307.5 562.8,307.6 570.0,308.6C577.2,309.6 585.0,311.9 590.0,312.6C595.0,313.3 593.5,311.9 600.0,313.0C606.5,314.1 620.7,318.4 629.0,319.0C637.3,319.6 642.2,317.8 650.0,316.5C657.8,315.2 670.3,312.2 676.0,311.2C681.7,310.3 680.2,310.4 684.0,310.7C687.8,311.0 692.2,312.0 699.0,313.0C705.8,314.0 717.2,316.0 725.0,316.5C732.8,317.0 735.2,316.4 746.0,316.0C756.8,315.6 775.2,314.3 790.0,314.0C804.8,313.7 825.8,314.4 835.0,314.0C844.2,313.6 842.5,312.4 845.0,311.8C847.5,311.2 845.2,310.7 850.0,310.5C854.8,310.3 870.0,310.5 874.0,310.5" fill="none" stroke="#c42828" stroke-width="1.3" stroke-dasharray="8 10" opacity="0.55"/>
</g>
<rect x="18" y="352" width="856" height="2" fill="#1a1ab0"/>
<rect x="18" y="394" width="856" height="2" fill="#1a1ab0"/>
<clipPath id="cr"><rect x="18" y="342" width="870" height="55"/></clipPath>
<clipPath id="crt"><rect x="18" y="342" width="870" height="11"/></clipPath>
<g clip-path="url(#cr)">
<polyline points="18.0,372.0 56.0,373.0 58.7,365.3 69.0,368.0 77.0,370.5 79.5,361.4 82.0,377.0 95.0,378.4 103.0,387.0 108.0,379.7 116.0,379.0 120.0,371.9 124.0,378.4 129.0,374.5 135.5,377.0 144.6,355.0 152.0,356.8 159.0,351.0 168.0,360.0 173.0,356.8 178.0,356.2 186.0,350.2 194.0,357.5 199.0,355.0 203.0,365.3 209.7,368.7 217.5,379.7 225.0,382.0 228.0,378.4 235.8,381.8 241.0,377.6 246.0,379.7 254.0,371.9 259.0,360.0 267.0,356.2 274.8,365.3 280.0,356.8 284.0,364.0 290.4,356.8 297.0,362.7 304.0,350.5 310.4,352.3 319.5,346.3 323.4,356.2 328.6,354.0 335.0,351.5 340.0,360.0 347.0,356.2 353.0,359.4 357.0,352.3 366.0,355.0 374.0,349.7 379.0,356.2 384.6,350.5 396.0,358.8 404.0,344.5 414.6,344.5 419.8,355.0 427.6,362.7 435.4,360.0 443.0,362.7 449.7,361.0 457.6,373.0 464.0,358.8 473.0,358.8 479.7,354.0 483.6,361.0 490.0,356.2 494.0,364.0 498.0,360.0 511.0,378.4 517.4,374.5 522.6,384.9 527.9,381.0 539.6,380.0 548.7,369.2 557.8,368.0 563.0,379.7 576.0,379.7 583.9,386.2 591.7,381.0 600.0,384.9 604.0,391.4 609.5,387.5 616.0,384.9 620.7,377.6 627.8,390.0 638.0,377.0 642.0,375.8 646.0,369.2 653.8,367.2 660.0,356.2 665.5,362.0 672.0,361.0 679.8,371.9 687.7,377.0 694.0,378.4 700.7,386.2 706.0,382.3 709.8,384.4 717.6,378.4 721.5,381.0 725.4,378.4 731.9,374.5 739.7,364.0 744.0,377.0 748.9,374.5 754.0,374.5 758.0,379.7 761.9,379.7 764.5,374.0 771.0,374.5 784.0,369.2 790.5,371.3 797.0,362.7 803.5,373.0 810.0,376.0 818.0,378.0 824.0,373.0 831.0,369.2 836.0,362.7 841.3,356.8 846.5,364.0 851.7,360.0 857.0,374.5 862.0,368.7 867.0,374.5 873.9,374.5" fill="none" stroke="#e8862a" stroke-width="1" />
</g>
<g clip-path="url(#crt)">
<polyline points="18.0,372.0 56.0,373.0 58.7,365.3 69.0,368.0 77.0,370.5 79.5,361.4 82.0,377.0 95.0,378.4 103.0,387.0 108.0,379.7 116.0,379.0 120.0,371.9 124.0,378.4 129.0,374.5 135.5,377.0 144.6,355.0 152.0,356.8 159.0,351.0 168.0,360.0 173.0,356.8 178.0,356.2 186.0,350.2 194.0,357.5 199.0,355.0 203.0,365.3 209.7,368.7 217.5,379.7 225.0,382.0 228.0,378.4 235.8,381.8 241.0,377.6 246.0,379.7 254.0,371.9 259.0,360.0 267.0,356.2 274.8,365.3 280.0,356.8 284.0,364.0 290.4,356.8 297.0,362.7 304.0,350.5 310.4,352.3 319.5,346.3 323.4,356.2 328.6,354.0 335.0,351.5 340.0,360.0 347.0,356.2 353.0,359.4 357.0,352.3 366.0,355.0 374.0,349.7 379.0,356.2 384.6,350.5 396.0,358.8 404.0,344.5 414.6,344.5 419.8,355.0 427.6,362.7 435.4,360.0 443.0,362.7 449.7,361.0 457.6,373.0 464.0,358.8 473.0,358.8 479.7,354.0 483.6,361.0 490.0,356.2 494.0,364.0 498.0,360.0 511.0,378.4 517.4,374.5 522.6,384.9 527.9,381.0 539.6,380.0 548.7,369.2 557.8,368.0 563.0,379.7 576.0,379.7 583.9,386.2 591.7,381.0 600.0,384.9 604.0,391.4 609.5,387.5 616.0,384.9 620.7,377.6 627.8,390.0 638.0,377.0 642.0,375.8 646.0,369.2 653.8,367.2 660.0,356.2 665.5,362.0 672.0,361.0 679.8,371.9 687.7,377.0 694.0,378.4 700.7,386.2 706.0,382.3 709.8,384.4 717.6,378.4 721.5,381.0 725.4,378.4 731.9,374.5 739.7,364.0 744.0,377.0 748.9,374.5 754.0,374.5 758.0,379.7 761.9,379.7 764.5,374.0 771.0,374.5 784.0,369.2 790.5,371.3 797.0,362.7 803.5,373.0 810.0,376.0 818.0,378.0 824.0,373.0 831.0,369.2 836.0,362.7 841.3,356.8 846.5,364.0 851.7,360.0 857.0,374.5 862.0,368.7 867.0,374.5 873.9,374.5" fill="none" stroke="#e030e0" stroke-width="1" />
</g>
<g fill="#ffffff" font-size="11px"><text x="28.9" y="421" text-anchor="middle" font-size="12px" letter-spacing="-0.75px">11</text><text x="48.9" y="421" text-anchor="middle" font-size="12px" letter-spacing="-0.75px">12</text><text x="68.9" y="421" text-anchor="middle" font-size="12px" letter-spacing="-0.75px">13</text><text x="88.9" y="421" text-anchor="middle" font-size="12px" letter-spacing="-0.75px">14</text><text x="108.9" y="421" text-anchor="middle" font-size="12px" letter-spacing="-0.75px">15</text><text x="128.9" y="421" text-anchor="middle" font-size="12px" letter-spacing="-0.75px">18</text><text x="148.9" y="421" text-anchor="middle" font-size="12px" letter-spacing="-0.75px">19</text><text x="168.9" y="421" text-anchor="middle" font-size="12px" letter-spacing="-0.75px">20</text><text x="188.9" y="421" text-anchor="middle" font-size="12px" letter-spacing="-0.75px">21</text><text x="208.9" y="421" text-anchor="middle" font-size="12px" letter-spacing="-0.75px">22</text><text x="228.9" y="421" text-anchor="middle" font-size="12px" letter-spacing="-0.75px">25</text><text x="248.9" y="421" text-anchor="middle" font-size="12px" letter-spacing="-0.75px">26</text><text x="268.9" y="421" text-anchor="middle" font-size="12px" letter-spacing="-0.75px">27</text><text x="288.9" y="421" text-anchor="middle" font-size="12px" letter-spacing="-0.75px">28</text><text x="308.9" y="421" text-anchor="middle" font-size="12px" letter-spacing="-0.75px">29</text><text x="329.9" y="421" text-anchor="middle" font-size="12px" letter-spacing="-0.75px">1</text><text x="349.9" y="421" text-anchor="middle" font-size="12px" letter-spacing="-0.75px">2</text><text x="369.9" y="421" text-anchor="middle" font-size="12px" letter-spacing="-0.75px">3</text><text x="389.9" y="421" text-anchor="middle" font-size="12px" letter-spacing="-0.75px">4</text><text x="409.9" y="421" text-anchor="middle" font-size="12px" letter-spacing="-0.75px">5</text><text x="429.9" y="421" text-anchor="middle" font-size="12px" letter-spacing="-0.75px">8</text><text x="449.9" y="421" text-anchor="middle" font-size="12px" letter-spacing="-0.75px">9</text><text x="469.9" y="421" text-anchor="middle" font-size="12px" letter-spacing="-0.75px">10</text><text x="489.9" y="421" text-anchor="middle" font-size="12px" letter-spacing="-0.75px">11</text><text x="509.9" y="421" text-anchor="middle" font-size="12px" letter-spacing="-0.75px">12</text><text x="529.9" y="421" text-anchor="middle" font-size="12px" letter-spacing="-0.75px">15</text><text x="549.9" y="421" text-anchor="middle" font-size="12px" letter-spacing="-0.75px">16</text><text x="569.9" y="421" text-anchor="middle" font-size="12px" letter-spacing="-0.75px">17</text><text x="589.9" y="421" text-anchor="middle" font-size="12px" letter-spacing="-0.75px">18</text><text x="609.9" y="421" text-anchor="middle" font-size="12px" letter-spacing="-0.75px">19</text><text x="629.9" y="421" text-anchor="middle" font-size="12px" letter-spacing="-0.75px">22</text><text x="649.9" y="421" text-anchor="middle" font-size="12px" letter-spacing="-0.75px">23</text><text x="669.9" y="421" text-anchor="middle" font-size="12px" letter-spacing="-0.75px">24</text><text x="689.9" y="421" text-anchor="middle" font-size="12px" letter-spacing="-0.75px">25</text><text x="709.9" y="421" text-anchor="middle" font-size="12px" letter-spacing="-0.75px">26</text><text x="729.9" y="421" text-anchor="middle" font-size="12px" letter-spacing="-0.75px">29</text><text x="749.9" y="421" text-anchor="middle" font-size="12px" letter-spacing="-0.75px">30</text><text x="770.9" y="421" text-anchor="middle" font-size="12px" letter-spacing="-0.75px">1</text><text x="790.9" y="421" text-anchor="middle" font-size="12px" letter-spacing="-0.75px">2</text><text x="810.9" y="421" text-anchor="middle" font-size="12px" letter-spacing="-0.75px">3</text><text x="830.9" y="421" text-anchor="middle" font-size="12px" letter-spacing="-0.75px">6</text><text x="850.9" y="421" text-anchor="middle" font-size="12px" letter-spacing="-0.75px">7</text><text x="870.9" y="421" text-anchor="middle" font-size="12px" letter-spacing="-0.75px">8</text><text x="895.5" y="53" font-size="12px" letter-spacing="-0.75px">1.1400</text><text x="895.5" y="97" font-size="12px" letter-spacing="-0.75px">1.1300</text><text x="895.5" y="141" font-size="12px" letter-spacing="-0.75px">1.1200</text><text x="895.5" y="185" font-size="12px" letter-spacing="-0.75px">1.1100</text><text x="895.5" y="228" font-size="12px" letter-spacing="-0.75px">1.1000</text><text x="895.5" y="272" font-size="12px" letter-spacing="-0.75px">1.0900</text><text x="897.2" y="295" font-size="12px" letter-spacing="-0.75px">+0.01</text><text x="897.2" y="322" font-size="12px" letter-spacing="-0.75px">-0.00</text><text x="895.5" y="381" font-size="12px" letter-spacing="-0.75px">50</text></g>
</svg>
<div id="legend" class="abs"><div class="strip abs"></div>
<div class="sq abs" style="left:4px;background:linear-gradient(#f05050,#c82030);border-color:#8a1018"></div>
<div class="sq abs" style="left:17px;background:linear-gradient(#40b8f0,#1a88c8);border-color:#104a80"></div>
</div>
<div id="lt" class="abs"><span style="position:relative;left:-29px;color:#1c1cf0">Exponential_Moving_Average</span></div>
<div class="abs" style="left:157px;top:39px;font-size:11px;letter-spacing:-0.45px;color:#e82424;white-space:nowrap;height:13px;background:#3b4049;padding-right:1px">Exponential_Moving_Average</div>
<div class="abs" style="left:18px;top:284px;font-size:11px;letter-spacing:-0.75px;color:#d42a2a;background:#3b4049;padding:0 1px 0 1px;height:13px">MACD</div>
<div class="abs" style="left:18px;top:343px;font-size:11px;letter-spacing:-0.6px;color:#e8862a;background:#3b4049;padding:0 1px 0 1px;height:12px">RSI</div>
<div id="pbox" class="abs"></div>
<div id="ptxt" class="abs">1.1273</div>
<svg width="1152" height="648" style="position:absolute;left:0;top:0;font-family:'Liberation Sans',sans-serif"><polygon points="18.5,374.5 78.5,374.5 80.5,376.5 80.5,391.5 78.5,393.5 18.5,393.5" fill="#5c6a7c" stroke="#c4d8e8" stroke-width="1"/><rect x="17" y="374" width="2" height="27" fill="#d4eaea"/><text x="25" y="388" font-size="11px" fill="#ffffff">Май 2020</text><polygon points="331.5,374.5 398.5,374.5 400.5,376.5 400.5,391.5 398.5,393.5 331.5,393.5" fill="#5c6a7c" stroke="#c4d8e8" stroke-width="1"/><rect x="330" y="374" width="2" height="27" fill="#d4eaea"/><text x="338" y="388" font-size="11px" fill="#ffffff">Июнь 2020</text><polygon points="772.5,374.5 838.5,374.5 840.5,376.5 840.5,391.5 838.5,393.5 772.5,393.5" fill="#5c6a7c" stroke="#c4d8e8" stroke-width="1"/><rect x="771" y="374" width="2" height="27" fill="#d4eaea"/><text x="779" y="388" font-size="11px" fill="#ffffff">Июль 2020</text></svg>
</body></html>
